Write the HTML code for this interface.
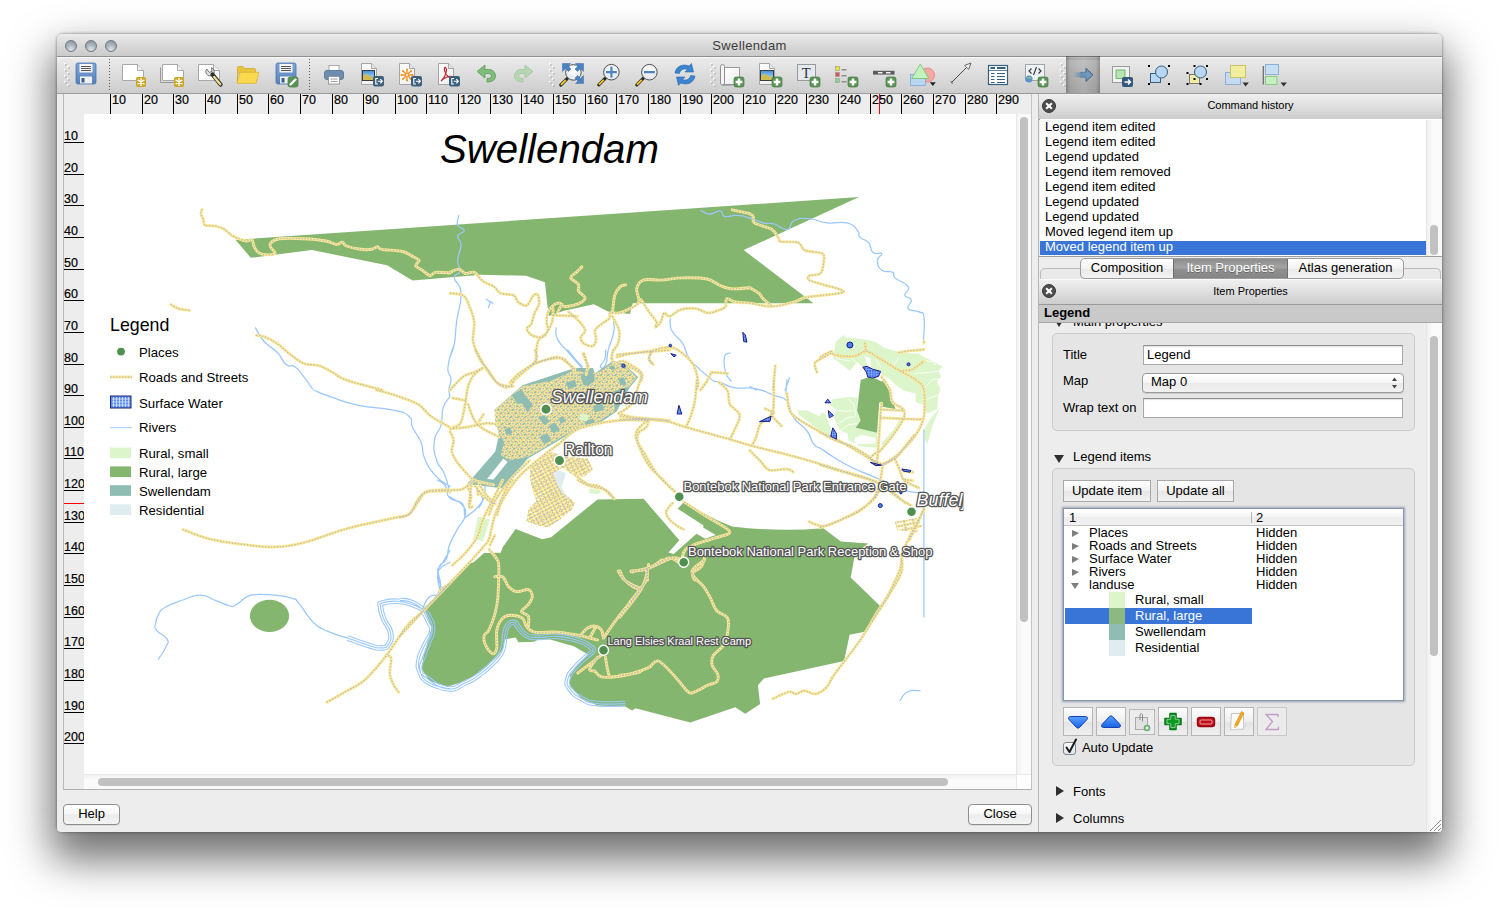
<!DOCTYPE html>
<html><head><meta charset="utf-8"><title>Swellendam</title>
<style>
*{box-sizing:border-box;margin:0;padding:0}
html,body{width:1499px;height:911px;background:#fff;overflow:hidden}
body{font-family:"Liberation Sans","DejaVu Sans",sans-serif;font-size:13px;color:#000;position:relative}
.abs{position:absolute}
#shadow{position:absolute;left:57px;top:34px;width:1385px;height:798px;border-radius:6px;box-shadow:0 22px 42px 6px rgba(0,0,0,.56),0 0 3px rgba(0,0,0,.5)}
#win{position:absolute;left:57px;top:34px;width:1385px;height:798px;border-radius:5px 5px 4px 4px;background:#ededed;overflow:hidden}
#win>*{position:absolute}
#title{left:0;top:0;width:1385px;height:23px;background:linear-gradient(#ebebeb,#d6d6d6 60%,#cbcbcb);border-bottom:1px solid #8e8e8e;letter-spacing:.35px;text-align:center;line-height:23px;font-size:13px;color:#3c3c3c}
.tl{position:absolute;top:6px;width:12px;height:12px;border-radius:50%;background:radial-gradient(circle at 50% 85%,#dfe6ec 0,#aeb7c0 45%,#858d96 100%);border:1px solid #707880}
#tool{left:0;top:23px;width:1385px;height:37px;background:linear-gradient(#ebebeb,#cdcdcd);border-bottom:1px solid #9b9b9b;border-top:1px solid #f8f8f8}
#tool svg{position:absolute;top:-2px;left:0}
/* composer view */
#view{left:6px;top:60px;width:969px;height:696px;background:#ededed;border-left:1px solid #b9b9b9;border-bottom:1px solid #b0b0b0;border-right:1px solid #c4c4c4}
#page{left:27px;top:80px;width:932px;height:660px;background:#fff;overflow:hidden}
#vsb{left:959px;top:80px;width:15px;height:660px;background:linear-gradient(90deg,#f2f2f2,#fbfbfb 40%,#fafafa);border-left:1px solid #e8e8e8}
#hsb{left:27px;top:740px;width:932px;height:15px;background:linear-gradient(#f2f2f2,#fbfbfb 40%,#fafafa);border-top:1px solid #e8e8e8}
#corner{left:959px;top:740px;width:15px;height:15px;background:#fff;border-left:1px solid #e8e8e8;border-top:1px solid #e8e8e8}
.thumb{position:absolute;background:#c1c1c1;border-radius:4px}
.th{position:absolute;top:0;width:1px;height:21px;background:#000}
.nh{position:absolute;top:-1px;-webkit-text-stroke:.2px #000;font-weight:normal;font-size:12.5px;line-height:14px;font-style:normal}
.tv{position:absolute;left:0;width:20px;height:1px;background:#000}
.nv{position:absolute;left:0;-webkit-text-stroke:.2px #000;font-weight:normal;font-size:12.5px;line-height:14px;width:20px;overflow:hidden;white-space:nowrap}
.btn{height:21px;border:1px solid #8e8e8e;border-radius:4px;background:linear-gradient(#fff 0,#f6f6f6 48%,#ececec 52%,#f4f4f4 100%);text-align:center;line-height:17px;font-size:13px;box-shadow:0 1px 0 rgba(0,0,0,.08)}
/* right panel */
#rp{left:981px;top:60px;width:404px;height:738px;background:#ededed;border-left:1px solid #b6b6b6;overflow:hidden}
#rpi{left:0;top:-1px;width:403px;height:739px}
#rpi>*{position:absolute}
#rp>*{position:absolute}
.dtitle{left:0;width:403px;background:linear-gradient(#f0f0f0,#cdcdcd);border-bottom:1px solid #9a9a9a;border-top:1px solid #fbfbfb;text-align:center;font-size:11px;color:#000}
.xbtn{position:absolute;left:3px;width:14px;height:14px;border-radius:50%;background:#4d4d4d;border:1px solid #3a3a3a}
.xbtn:before,.xbtn:after{content:"";position:absolute;left:5px;top:2px;width:2px;height:8px;background:#fff;transform:rotate(45deg)}
.xbtn:after{transform:rotate(-45deg)}
#hist{left:1px;top:26px;width:402px;height:137px;background:#fff;font-size:13px;line-height:15px;overflow:hidden;border-top:1px solid #fff}
#hist div{padding-left:5px;height:15px;line-height:13px;white-space:nowrap}
#hist .sel{background:#3875d7;color:#fff;width:387px;margin-left:0;padding-left:5px;height:14.5px;line-height:12px;margin-top:.5px}
.grp{background:#e5e5e5;border:1px solid #cbcbcb;border-radius:5px}
.inp{background:#fff;border:1px solid #a8a8a8;border-top-color:#8e8e8e;height:20px;font-size:13px;line-height:18px;padding-left:3px;box-shadow:inset 0 1px 1px rgba(0,0,0,.12)}
.lbl{font-size:13px;line-height:15px;white-space:nowrap}
.tri-d{width:0;height:0;border-left:5.5px solid transparent;border-right:5.5px solid transparent;border-top:8px solid #2f2f2f}
.tri-r{width:0;height:0;border-top:5.5px solid transparent;border-bottom:5.5px solid transparent;border-left:8px solid #2f2f2f}
.sq{height:20px;border:1px solid #a9a9a9;background:linear-gradient(#fff,#f1f1f1 50%,#e6e6e6 51%,#f2f2f2);text-align:center;line-height:18px;font-size:13px}
.tb{width:30px;height:29px;border:1px solid #b5b5b5;background:linear-gradient(#fdfdfd,#efefef 50%,#e4e4e4 51%,#efefef)}
</style></head><body>
<div id="shadow"></div>
<div id="win">
<div id="title"><span class="tl" style="left:8px"></span><span class="tl" style="left:28px"></span><span class="tl" style="left:48px"></span>Swellendam</div>
<div id="tool"><svg width="1385" height="37" viewBox="57 56 1385 37">
<defs>
<linearGradient id="gy" x1="0" y1="0" x2="0" y2="1"><stop offset="0" stop-color="#fbe07a"/><stop offset="1" stop-color="#f2c33c"/></linearGradient>
<linearGradient id="gb" x1="0" y1="0" x2="0" y2="1"><stop offset="0" stop-color="#7fa5d6"/><stop offset="1" stop-color="#5681bb"/></linearGradient>
<linearGradient id="gpg" x1="0" y1="0" x2="1" y2="1"><stop offset="0" stop-color="#fff"/><stop offset="1" stop-color="#ececec"/></linearGradient>
<g id="hdl"><rect x="1" y="1" width="1.5" height="1.5" fill="#a3a3a3"/><rect x="0" y="0" width="1.6" height="1.6" fill="#fff"/><rect x="4" y="4" width="1.5" height="1.5" fill="#a3a3a3"/><rect x="3" y="3" width="1.6" height="1.6" fill="#fff"/><rect x="1" y="7" width="1.5" height="1.5" fill="#a3a3a3"/><rect x="0" y="6" width="1.6" height="1.6" fill="#fff"/><rect x="4" y="10" width="1.5" height="1.5" fill="#a3a3a3"/><rect x="3" y="9" width="1.6" height="1.6" fill="#fff"/><rect x="1" y="13" width="1.5" height="1.5" fill="#a3a3a3"/><rect x="0" y="12" width="1.6" height="1.6" fill="#fff"/><rect x="4" y="16" width="1.5" height="1.5" fill="#a3a3a3"/><rect x="3" y="15" width="1.6" height="1.6" fill="#fff"/><rect x="1" y="19" width="1.5" height="1.5" fill="#a3a3a3"/><rect x="0" y="18" width="1.6" height="1.6" fill="#fff"/><rect x="4" y="22" width="1.5" height="1.5" fill="#a3a3a3"/><rect x="3" y="21" width="1.6" height="1.6" fill="#fff"/></g>
<g id="page"><path d="M0.5 0.5H15.5L21.5 6.5V16.5H0.5Z" fill="#fff" stroke="#a8a8a8"/><path d="M15.5 0.5V6.5H21.5" fill="#f0f0f0" stroke="#a8a8a8"/></g>
<g id="doc"><path d="M0.5 0.5H10.5L15.5 5.5V21.5H0.5Z" fill="url(#gpg)" stroke="#a5a5a5"/><path d="M10.5 0.5V5.5H15.5" fill="#e8e8e8" stroke="#a5a5a5"/></g>
<g id="star"><rect x="0" y="0" width="10" height="10" rx="2" fill="#c9a520"/><path d="M5 1.5V8.5M2 3.2L8 6.8M8 3.2L2 6.8" stroke="#fff" stroke-width="1.4" stroke-linecap="round"/></g>
<g id="plus"><rect x="0" y="0" width="10" height="10" rx="2" fill="#5b9357" stroke="#457b41" stroke-width=".7"/><path d="M5 1.600V8.400M1.600 5H8.400" stroke="#fff" stroke-width="2.500"/></g>
<g id="exp"><rect x="0" y="0" width="11" height="10.500" rx="2" fill="#3d607c"/><path d="M5 2.500H2.800V8H5M4.800 5.250H9.300M7.300 3.200L9.400 5.250L7.300 7.300" stroke="#fff" stroke-width="1.100" fill="none"/></g><linearGradient id="sky" x1="0" y1="0" x2="0" y2="1"><stop offset="0" stop-color="#3d8fe0"/><stop offset="1" stop-color="#cfe8f8"/></linearGradient>
<g id="floppy"><rect x="0" y="0" width="20" height="21" rx="2" fill="url(#gb)" stroke="#4a74ad" stroke-width=".8"/><rect x="3.5" y="1" width="13" height="8.5" fill="#f4f4f4"/><path d="M5 3.500H15M5 5.500H15M5 7.500H15" stroke="#555" stroke-width="1"/><rect x="4" y="13.500" width="12" height="7" fill="#f0f0f0"/><rect x="5.500" y="15" width="3" height="4.500" fill="#3d5f92"/></g>
<radialGradient id="lens" cx=".5" cy=".35" r=".7"><stop offset="0" stop-color="#fff"/><stop offset="1" stop-color="#dfe3e8"/></radialGradient><g id="mag"><path d="M0.800 18.800L7.200 12.400" stroke="#2a2a2a" stroke-width="3.200" stroke-linecap="round"/><path d="M0.900 18.700L5.800 13.800" stroke="#f2c81e" stroke-width="1.900" stroke-linecap="butt"/><circle cx="13.400" cy="6.200" r="7.800" fill="url(#lens)" stroke="#505050" stroke-width="1"/></g>
</defs>
<use href="#hdl" x="64" y="63"/>
<use href="#hdl" x="549" y="63"/>
<use href="#hdl" x="710" y="63"/>
<use href="#hdl" x="1060" y="63"/>
<path d="M109.5 59V90" stroke="#5a5a5a" stroke-width="1" stroke-dasharray="1 2"/>
<path d="M309.5 59V90" stroke="#5a5a5a" stroke-width="1" stroke-dasharray="1 2"/>
<use href="#floppy" x="76" y="63"/>
<use href="#page" x="122" y="64"/><use href="#star" x="136" y="77"/>
<path d="M160.5 67.500V82.500H178" fill="none" stroke="#9a9a9a"/><use href="#page" x="162" y="64"/><use href="#star" x="174" y="77"/>
<use href="#page" x="198" y="64"/><path d="M206.500 69.500L209.500 72.500L212 71L211 67.500A4.200 4.200 0 1 1 206.500 69.500Z" fill="#e4e4e4" stroke="#6a6a6a" stroke-width=".9" stroke-linejoin="round" transform="rotate(8 210 71)"/><path d="M212.500 74.500L220.500 84.500" stroke="#2e2e2e" stroke-width="4.200" stroke-linecap="round"/><path d="M214.200 77L220.200 84.300" stroke="#eadc8e" stroke-width="2.300" stroke-linecap="round"/>
<path d="M237.500 83V67.500Q237.500 66.500 238.500 66.500H243L244.500 68.500H254.500Q255.500 68.500 255.500 69.500V73H237.500Z" fill="#e9c43a" stroke="#d1ab2c" stroke-width=".8"/><path d="M237 83.300L240.200 72.300H258.900L256.200 83.300Z" fill="#fbd94c" stroke="#d9b43a" stroke-width=".8" stroke-linejoin="round"/>
<use href="#floppy" x="276" y="63"/><rect x="288" y="77" width="10" height="10" rx="2" fill="#5b9357" stroke="#457b41" stroke-width=".7"/><path d="M290.500 84.500L295.500 79.500" stroke="#fff" stroke-width="2.2" stroke-linecap="round"/>
<rect x="329" y="65.500" width="10" height="6" fill="#fff" stroke="#9a9a9a" stroke-width=".8"/><rect x="324.500" y="70.500" width="19" height="9" rx="2.5" fill="#6c8db0" stroke="#4f6f92" stroke-width=".8"/><rect x="328.500" y="76.500" width="11" height="7.500" fill="#fdfdfd" stroke="#8a8a8a" stroke-width=".8"/><path d="M330.500 79H337.500M330.500 81.500H337.500" stroke="#888" stroke-width=".8"/>
<use href="#doc" x="361" y="63"/><rect x="362.500" y="70.500" width="12" height="10" fill="url(#sky)" stroke="#3c3c3c"/><path d="M363 80V76.500L366 73.500L370 76L374 77.500V80Z" fill="#cdbb55"/><use href="#exp" x="373" y="76"/>
<use href="#doc" x="399" y="63"/><path d="M407 75L412.6 75.0M407 75L411.0 79.0M407 75L407.0 80.6M407 75L403.0 79.0M407 75L401.4 75.0M407 75L403.0 71.0M407 75L407.0 69.4M407 75L411.0 71.0" stroke="#f0921e" stroke-width="1.300"/><circle cx="412.6" cy="75.0" r="1" fill="#f0921e"/><circle cx="411.0" cy="79.0" r="1" fill="#f0921e"/><circle cx="407.0" cy="80.6" r="1" fill="#f0921e"/><circle cx="403.0" cy="79.0" r="1" fill="#f0921e"/><circle cx="401.4" cy="75.0" r="1" fill="#f0921e"/><circle cx="403.0" cy="71.0" r="1" fill="#f0921e"/><circle cx="407.0" cy="69.4" r="1" fill="#f0921e"/><circle cx="411.0" cy="71.0" r="1" fill="#f0921e"/><circle cx="407" cy="75" r="1.500" fill="#fff" stroke="#f0921e" stroke-width=".8"/><use href="#exp" x="411" y="76"/>
<use href="#doc" x="438" y="63"/><path d="M441 81C446 77 447.500 69 445.500 67.500C443.500 67 444 73 448 76.500C451 79 453.500 77.500 452 76.500C449 75.500 444 78 441 81Z" fill="none" stroke="#c3272d" stroke-width="1.200"/><use href="#exp" x="449" y="76"/>
<path d="M477 71.500L485 65V69.500H488.500C493.500 69.500 495.500 73 495.500 76C495.500 80 492 82 487 82V78.500C490 78.500 491.500 77.500 491.500 76C491.500 74.500 490 73.500 488 73.500H485V78Z" fill="#80bb7a" stroke="#5b9a57" stroke-width=".8" stroke-linejoin="round"/>
<path d="M533 71.500L525 65V69.500H521.500C516.500 69.500 514.500 73 514.500 76C514.500 80 518 82 523 82V78.500C520 78.500 518.500 77.500 518.500 76C518.500 74.500 520 73.500 522 73.500H525V78Z" fill="#b4d6b0" stroke="#a3c7a0" stroke-width=".8" stroke-linejoin="round"/>
<use href="#mag" x="560" y="66.200"/>
<g fill="#4b82c4" stroke="#3a6aa8" stroke-width=".5"><path d="M562.500 63.500H570.500L568 66L571 69L568.500 71.500L565.500 68.500L562.500 71.500Z"/><path d="M583.500 63.500H575.500L578 66L575 69L577.500 71.500L580.500 68.500L583.500 71.500Z"/><path d="M583.500 83.500H575.500L578 81L575 78L577.500 75.500L580.500 78.500L583.500 75.500Z"/></g>
<use href="#mag" x="598" y="66"/><path d="M606 72.200H616.800M611.400 66.800V77.600" stroke="#4a82c4" stroke-width="2.200"/>
<use href="#mag" x="636" y="66"/><path d="M644 72.200H654.800" stroke="#4a82c4" stroke-width="2.200"/>
<g fill="#3b84d0" stroke="#2c68ad" stroke-width=".6" stroke-linejoin="round"><path d="M675 73C676 66 683 63.500 689 66L691.500 63.500L693.500 72H685L687.500 69.500C683.500 68 680 70 679.500 73.500Z"/><path d="M695 76C694 83 687 85.500 681 83L678.500 85.500L676.500 77H685L682.500 79.500C686.500 81 690 79 690.500 75.500Z"/></g>
<rect x="723.500" y="67.500" width="16" height="17" fill="url(#gpg)" stroke="#9a9a9a"/><rect x="720.500" y="64.500" width="4" height="20.500" rx="2" fill="#f6f6f6" stroke="#8f8f8f"/><path d="M722.500 85Q724 85.500 739.500 84.500" stroke="#8f8f8f" fill="none"/><use href="#plus" x="734" y="77"/>
<use href="#doc" x="759" y="63"/><rect x="760.500" y="70.500" width="13" height="10" fill="url(#sky)" stroke="#3c3c3c"/><path d="M761 80V76.500L764 73.500L768.500 76L773 77.500V80Z" fill="#cdbb55"/><use href="#plus" x="772" y="77"/>
<rect x="797.500" y="64.500" width="18" height="16" fill="#e4e9f0" stroke="#9a9a9a"/><text x="806.300" y="78" font-family="Liberation Serif,serif" font-size="14.500" text-anchor="middle" fill="#333">T</text><use href="#plus" x="810" y="77"/>
<rect x="835.500" y="66.500" width="4" height="4" fill="#f2e02a" stroke="#999" stroke-width=".6"/><rect x="835.500" y="72.500" width="4" height="4" fill="#d9534f" stroke="#999" stroke-width=".6"/><rect x="835.500" y="78.500" width="4" height="4" fill="#8fd08f" stroke="#999" stroke-width=".6"/><path d="M841.500 69.700H846.500M841.500 75.700H846.500M841.500 81.700H846.500" stroke="#8e8e8e" stroke-width="1.500"/><use href="#plus" x="848" y="77"/>
<rect x="873" y="70.800" width="21.500" height="3.800" fill="#5c5c5c"/><path d="M878 72.700H882.500M886 72.700H890.500" stroke="#f2f2f2" stroke-width="1.400"/><use href="#plus" x="886" y="77"/>
<circle cx="927.500" cy="75" r="7" fill="#f4a9a6" stroke="#e07f7c" stroke-width=".8"/><rect x="910.500" y="74.500" width="15" height="11" fill="#b9d6f2" stroke="#7ea8d6" stroke-width=".8"/><path d="M920.300 64L928.800 78.500H911.800Z" fill="#c3f2be" stroke="#72c06e" stroke-width=".8"/><path d="M929.800 82.300H935.800L932.800 86Z" fill="#222"/>
<path d="M951.500 82.500L967.500 66.500" stroke="#4a4a4a" stroke-width="1"/><path d="M971 63L968.600 69.400L964.600 65.400Z" fill="#f4f4f4" stroke="#4a4a4a" stroke-width=".8"/><path d="M950.500 81.500L952 82M952 84L952.500 82.500" stroke="#4a4a4a" stroke-width=".8"/>
<rect x="988.500" y="65.500" width="19" height="19" fill="#fff" stroke="#35607f" stroke-width="1.200"/><path d="M990.500 68H995M997 68H1005.500" stroke="#35607f" stroke-width="2"/><path d="M988.500 70.500H1007.500" stroke="#35607f" stroke-width=".8"/><path d="M991 73.500H994.500M997 73.500H1005M991 76.500H994.500M997 76.500H1005M991 79.500H994.500M997 79.500H1005M991 82.500H994.500M997 82.500H1005" stroke="#35607f" stroke-width="1"/>
<rect x="1025.500" y="64.500" width="19" height="16" fill="#eef2f6" stroke="#a5a5a5"/><path d="M1031.500 68.500L1029 71L1031.500 73.500M1038.500 68.500L1041 71L1038.500 73.500M1036.500 67L1033.500 75" stroke="#333" stroke-width="1.100" fill="none"/><circle cx="1029" cy="79" r="3.500" fill="#5a8fd0"/><path d="M1027 78C1028.500 76.500 1030 79 1031.500 77.500" stroke="#7fc97f" stroke-width="1.500" fill="none"/><use href="#plus" x="1038" y="77"/>
<defs><linearGradient id="prs" x1="0" y1="0" x2="1" y2="0"><stop offset="0" stop-color="#000" stop-opacity=".38"/><stop offset=".12" stop-color="#000" stop-opacity=".23"/><stop offset=".5" stop-color="#000" stop-opacity=".17"/><stop offset=".88" stop-color="#000" stop-opacity=".23"/><stop offset="1" stop-color="#000" stop-opacity=".38"/></linearGradient><linearGradient id="arr" x1="0" y1="0" x2="1" y2="0"><stop offset="0" stop-color="#5f8ab0" stop-opacity="0"/><stop offset=".6" stop-color="#5f8ab0" stop-opacity=".9"/><stop offset="1" stop-color="#6f98bc"/></linearGradient></defs><rect x="1066" y="56" width="34" height="37" fill="url(#prs)"/><rect x="1066" y="57" width="34" height="3" fill="#000" opacity=".08"/>
<rect x="1073" y="72.300" width="14" height="5" fill="url(#arr)"/><path d="M1086 72.300V68.200L1093 74.800L1086 81.400V77.300" fill="#6f98bc" stroke="#35607f" stroke-width=".9" stroke-linejoin="round"/><path d="M1080 72.300H1086M1080 77.300H1086" stroke="#35607f" stroke-width=".7" opacity=".6"/>
<rect x="1112.500" y="66.500" width="17" height="16" fill="#f2f2f2" stroke="#9a9a9a"/><rect x="1116" y="70" width="9" height="8.500" fill="#b7e4b2" stroke="#5aa856" stroke-width=".8"/><rect x="1122" y="77" width="11" height="10" rx="2" fill="#35587a"/><path d="M1124.500 82H1130.500M1128 79.500L1130.500 82L1128 84.500" stroke="#fff" stroke-width="1.400" fill="none"/>
<rect x="1150.500" y="73.500" width="10" height="9" fill="#b9d6f2" stroke="#35607f"/><circle cx="1161.500" cy="72" r="6" fill="#b9d6f2" stroke="#35607f"/><g fill="#000"><rect x="1148" y="65" width="2" height="2"/><rect x="1168" y="65" width="2" height="2"/><rect x="1148" y="83" width="2" height="2"/><rect x="1168" y="83" width="2" height="2"/></g>
<rect x="1189.500" y="74.500" width="10" height="9" fill="#f2eda0" stroke="#777"/><circle cx="1200.500" cy="72" r="6" fill="#b9d6f2" stroke="#35607f"/><g fill="#000"><rect x="1186.500" y="72" width="2" height="2"/><rect x="1186.500" y="83" width="2" height="2"/><rect x="1193.500" y="65" width="2" height="2"/><rect x="1206" y="65" width="2" height="2"/><rect x="1193.500" y="78" width="2" height="2"/><rect x="1206" y="78" width="2" height="2"/><rect x="1199.500" y="83" width="2" height="2"/></g>
<rect x="1225.500" y="72.500" width="15" height="12" fill="#c5daf2" stroke="#8fb0d6"/><rect x="1230.500" y="65.500" width="15" height="12" fill="#f2eda0" stroke="#c9c36a"/><path d="M1242.500 82.500H1248.800L1245.600 86.500Z" fill="#333"/>
<path d="M1263.300 66V84.500" stroke="#666" stroke-width="1.200"/><rect x="1265.500" y="64.500" width="13" height="10" fill="#c5dff5" stroke="#8fb0d6"/><rect x="1265.500" y="76.500" width="11.500" height="8" fill="#c4f0be" stroke="#8fc98a"/><path d="M1280.600 82.500H1286.900L1283.700 86.500Z" fill="#333"/>
</svg></div>
<div id="view"></div>
<div style="left:27px;top:60px;width:947px;height:20px;overflow:hidden;background:#ededed" id="hr">
<i class="th" style="left:26px"></i><b class="nh" style="left:28px">10</b>
<i class="th" style="left:58px"></i><b class="nh" style="left:60px">20</b>
<i class="th" style="left:89px"></i><b class="nh" style="left:91px">30</b>
<i class="th" style="left:121px"></i><b class="nh" style="left:123px">40</b>
<i class="th" style="left:153px"></i><b class="nh" style="left:155px">50</b>
<i class="th" style="left:184px"></i><b class="nh" style="left:186px">60</b>
<i class="th" style="left:216px"></i><b class="nh" style="left:218px">70</b>
<i class="th" style="left:248px"></i><b class="nh" style="left:250px">80</b>
<i class="th" style="left:279px"></i><b class="nh" style="left:281px">90</b>
<i class="th" style="left:311px"></i><b class="nh" style="left:313px">100</b>
<i class="th" style="left:342px"></i><b class="nh" style="left:344px">110</b>
<i class="th" style="left:374px"></i><b class="nh" style="left:376px">120</b>
<i class="th" style="left:406px"></i><b class="nh" style="left:408px">130</b>
<i class="th" style="left:437px"></i><b class="nh" style="left:439px">140</b>
<i class="th" style="left:469px"></i><b class="nh" style="left:471px">150</b>
<i class="th" style="left:501px"></i><b class="nh" style="left:503px">160</b>
<i class="th" style="left:532px"></i><b class="nh" style="left:534px">170</b>
<i class="th" style="left:564px"></i><b class="nh" style="left:566px">180</b>
<i class="th" style="left:596px"></i><b class="nh" style="left:598px">190</b>
<i class="th" style="left:627px"></i><b class="nh" style="left:629px">200</b>
<i class="th" style="left:659px"></i><b class="nh" style="left:661px">210</b>
<i class="th" style="left:691px"></i><b class="nh" style="left:693px">220</b>
<i class="th" style="left:722px"></i><b class="nh" style="left:724px">230</b>
<i class="th" style="left:754px"></i><b class="nh" style="left:756px">240</b>
<i class="th" style="left:786px"></i><b class="nh" style="left:788px">250</b>
<i class="th" style="left:817px"></i><b class="nh" style="left:819px">260</b>
<i class="th" style="left:849px"></i><b class="nh" style="left:851px">270</b>
<i class="th" style="left:881px"></i><b class="nh" style="left:883px">280</b>
<i class="th" style="left:912px"></i><b class="nh" style="left:914px">290</b>
<i class="th" style="left:795px;background:#ff0000"></i>
</div>
<div style="left:7px;top:80px;width:20px;height:660px;overflow:hidden;background:#ededed" id="vr">
<i class="tv" style="top:28px"></i><b class="nv" style="top:15px">10</b>
<i class="tv" style="top:60px"></i><b class="nv" style="top:47px">20</b>
<i class="tv" style="top:91px"></i><b class="nv" style="top:78px">30</b>
<i class="tv" style="top:123px"></i><b class="nv" style="top:110px">40</b>
<i class="tv" style="top:155px"></i><b class="nv" style="top:142px">50</b>
<i class="tv" style="top:186px"></i><b class="nv" style="top:173px">60</b>
<i class="tv" style="top:218px"></i><b class="nv" style="top:205px">70</b>
<i class="tv" style="top:250px"></i><b class="nv" style="top:237px">80</b>
<i class="tv" style="top:281px"></i><b class="nv" style="top:268px">90</b>
<i class="tv" style="top:313px"></i><b class="nv" style="top:300px">100</b>
<i class="tv" style="top:344px"></i><b class="nv" style="top:331px">110</b>
<i class="tv" style="top:376px"></i><b class="nv" style="top:363px">120</b>
<i class="tv" style="top:408px"></i><b class="nv" style="top:395px">130</b>
<i class="tv" style="top:439px"></i><b class="nv" style="top:426px">140</b>
<i class="tv" style="top:471px"></i><b class="nv" style="top:458px">150</b>
<i class="tv" style="top:503px"></i><b class="nv" style="top:490px">160</b>
<i class="tv" style="top:534px"></i><b class="nv" style="top:521px">170</b>
<i class="tv" style="top:566px"></i><b class="nv" style="top:553px">180</b>
<i class="tv" style="top:598px"></i><b class="nv" style="top:585px">190</b>
<i class="tv" style="top:629px"></i><b class="nv" style="top:616px">200</b>
<i class="tv" style="top:389px;background:#ff0000"></i>
</div>
<div id="page"><svg width="932" height="660" viewBox="84 114 932 660" style="position:absolute;left:0;top:0;font-family:'Liberation Sans',sans-serif">
<defs><clipPath id="mapclip"><rect x="100" y="190" width="863.5" height="560"/></clipPath></defs>
<g clip-path="url(#mapclip)">
<g id="landuse">
<path fill="#85b66f" d="M859 197 L235.5 239.8 L250.8 257.8 L312 250 L387 265.3 L412.5 280.6 L480.6 274.8 L526 275.7 L544.9 282.2 L547.5 306 L549 316 L564 310.8 L594 304.2 L608 311.5 L630 314.1 L632.7 303.3 L813.5 303.3 L743.7 250.1 Z"/>
<path fill="#85b66f" d="M424.7 610 L468.1 564 L474 562 L484 553.1 L500.7 552.7 L502.7 547.2 L515.6 529 L542.2 539.3 L551.1 537.3 L597.5 499.4 L643.6 498.8 L679.4 540.3 L668.4 552.6 L673.7 553.9 L696.5 533.7 L705.3 538.7 L715.8 535 L703.1 527.6 L703.6 525.4 L677.7 508.7 L683.4 502.6 L716.7 520.1 L732 526.5 Q778 532 823.3 528.2 L840.9 541.4 L868.3 543.6 L855.1 553.5 L850.7 577.6 L880.4 606.2 L866.1 631.4 L849.6 634.7 L844.1 661 L763.9 678.6 L757.9 685.2 L760.1 703.9 L745.2 713.7 L735.3 707.2 L690.3 722.5 L635.4 708.3 L632.1 710.4 L625.2 706.5 L597.5 705.6 L581.7 698.6 L569.9 686.8 L569.9 675 L577.8 665 L587.7 654.2 L573.8 646.3 L550.1 639.4 L538.3 639.4 L534.3 641.8 L518.5 642.3 L515.6 637.4 L504.7 639.4 L502.7 649.3 L496.8 657.2 L479 673 L465.2 680.9 L447.4 686.8 L429.6 680.9 L421.7 669 L423.7 655.2 L431.6 627.5 Z"/>
<ellipse cx="269.5" cy="615.9" rx="19.6" ry="16.2" fill="#85b66f"/>
<path fill="#dcf5cb" fill-rule="evenodd" d="M834.2 351.4 L835.7 342.1 L843.5 335.0 L846.4 337.8 L857.1 338.6 L864.2 339.3 L875.6 342.1 L884.2 347.8 L897.1 351.4 L901.3 352.8 L918.5 353.5 L925.6 357.8 L942.7 366.4 L938.4 370.7 L941.3 376.4 L937.0 382.1 L940.6 389.2 L938.4 394.9 L937.0 409.2 L927.0 413.5 L924.2 404.9 L915.6 402.1 L915.6 393.5 L904.2 390.7 L895.6 384.9 L889.9 379.2 L881.4 375.0 L878.5 370.7 L871.4 367.8 L869.9 357.8 L865.6 360.7 L867.8 366.4 L861.4 366.4 L857.1 362.1 L849.9 370.7 L832.8 357.8Z M832.8 399.2 L847.1 397.1 L857.8 397.8 L857.1 410.6 L860.7 420.6 L855.7 427.8 L877.1 432.8 L877.1 447.8 L858.5 446.3 L857.1 443.5 L848.5 440.6 L847.8 433.5 L840.0 430.6 L837.1 424.9 L834.2 417.8 L835.7 409.2 L830.0 404.9Z M854.9 437.8 L861.4 434.9 L875.6 437.8 L875.6 443.5 L858.5 444.2 L854.2 441.3Z M797.9 410.6 L807.1 410.6 L820.0 416.4 L820.7 412.8 L825.7 413.5 L827.1 419.2 L830.7 427.8 L831.4 433.5 L825.7 434.9 L818.5 429.2 L808.6 422.1 L798.6 414.9Z M939.9 407.8 L932.7 424.9 L927.0 444.9 L924.9 439.2 L924.2 429.2 L931.3 417.8Z M899.9 419.2 L902.8 420.6 L889.9 437.8 L882.8 446.3 L881.4 443.5 L892.8 430.6Z"/>
<path fill="none" stroke="#fff" stroke-width=".8" d="M898.5 357.8 L894.2 365.0 M875.6 359.3 L881.4 367.8 M925.6 360.7 L932.7 362.1 L935.6 365.0 M914.2 373.5 L931.3 372.1 L941.3 370.7 M924.2 387.8 L932.7 379.2 L939.9 379.2 M849.9 356.4 L857.1 363.5 M832.8 355.7 L840.0 359.3 L849.9 360.7 M847.1 397.8 L854.2 404.9 L855.7 416.4 M832.8 409.2 L844.2 411.4 L852.8 410.6 M838.5 423.5 L847.1 417.8 L854.2 416.4 M840.0 430.6 L848.5 424.9 L857.1 423.5 M938.4 394.9 L927.0 399.2"/>
<path fill="#fff" d="M864.2 355.7 L870.6 358.5 L869.9 364.3 L867.1 362.1Z"/>
<path fill="#85b66f" d="M860.7 380.0 L867.1 377.8 L875.6 378.5 L881.4 381.4 L884.2 380.7 L888.5 389.2 L895.6 409.2 L881.4 406.4 L880.6 402.1 L879.2 402.8 L877.1 432.8 L855.7 427.8 L860.7 420.6 L857.1 410.6Z"/>
</g>
<g fill="none" stroke="#9ac8fc" stroke-width="1.25" stroke-linejoin="round" stroke-linecap="round">
<path d="M255.4 327.9 C257.8 331.6 258.4 335.0 264.2 341.5 C270.1 348.1 271.5 346.4 277.4 352.5 C283.2 358.7 281.5 360.8 286.2 364.6 C290.9 368.4 290.3 363.6 295.0 366.8 C299.6 370.0 299.1 370.8 303.7 376.7 C308.4 382.5 310.2 385.5 312.5 388.8 M313.6 390.0 C318.0 391.8 318.1 392.5 330.1 396.6 C342.1 400.7 342.3 401.9 358.7 405.4 C375.1 408.9 378.1 406.8 391.6 409.8 C405.1 412.7 403.6 411.7 409.2 416.4 C414.7 421.0 409.2 420.3 412.5 427.3 C415.7 434.4 418.0 434.5 421.2 442.7 C424.5 450.9 420.7 449.3 424.5 458.1 C428.4 466.9 428.7 468.0 435.5 475.7 C442.3 483.3 446.2 483.7 450.0 486.6 M450.0 396.6 C448.2 399.5 445.6 400.0 443.2 407.6 C440.8 415.2 443.4 416.4 441.0 425.1 C438.7 433.9 435.6 431.1 434.4 440.5 C433.3 449.9 434.0 451.5 436.6 460.3 C439.3 469.1 440.7 464.7 444.3 473.5 C447.9 482.2 448.5 488.0 450.0 493.2 M450.0 550.3 C447.9 553.8 445.4 557.7 442.1 563.5 C438.8 569.4 437.7 565.2 437.7 572.3 C437.7 579.4 440.9 585.3 442.1 590.1 M158.3 659.3 C160.2 656.2 163.0 653.2 165.4 647.9 C167.7 642.5 169.5 643.8 167.1 639.1 C164.8 634.4 159.7 634.4 156.6 630.3 C153.5 626.2 154.9 628.1 155.5 623.7 C156.1 619.3 156.1 618.2 158.8 613.8 C161.4 609.4 158.9 610.9 165.4 607.2 C171.8 603.5 173.6 603.2 182.9 600.0 C192.3 596.8 191.7 595.0 200.5 595.1 C209.3 595.3 208.3 597.8 215.9 600.6 C223.5 603.4 223.8 604.5 229.1 605.7 C234.3 606.9 231.0 607.4 235.7 605.0 C240.3 602.7 241.4 599.7 246.6 596.9 C251.9 594.1 249.6 595.3 255.4 594.7 C261.3 594.1 259.2 593.9 268.6 594.7 C278.0 595.5 282.4 595.3 290.6 597.8 C298.8 600.2 293.5 597.6 299.4 603.9 C305.2 610.3 304.9 614.2 312.5 621.5 C320.1 628.8 318.5 627.0 327.9 631.4 C337.3 635.8 342.4 636.2 347.7 638.0 M450.0 562.2 C447.3 564.0 443.2 564.7 439.9 568.8 C436.6 572.9 438.0 571.1 437.7 577.6 C437.4 584.0 441.2 587.7 438.8 592.9 C436.5 598.2 433.3 592.9 428.9 597.3 C424.5 601.7 424.1 606.2 422.3 609.4 M458.8 215.3 C458.5 217.9 456.2 221.0 457.7 225.1 C459.2 229.2 464.3 227.7 464.3 230.6 C464.3 233.6 458.6 232.3 457.7 236.1 C456.8 239.9 461.0 238.5 461.0 244.9 C461.0 251.4 458.0 253.3 457.7 260.3 C457.4 267.3 460.8 266.6 459.9 271.3 C459.0 276.0 454.1 272.0 454.4 277.9 C454.7 283.7 460.4 281.5 461.0 293.2 C461.6 304.9 458.3 308.3 456.6 321.8 C454.8 335.3 456.1 334.4 454.4 343.7 C452.6 353.1 451.2 353.4 450.0 356.9 M556.1 327.9 C556.5 331.0 554.3 332.8 557.6 339.4 C561.0 345.9 562.2 344.9 568.6 352.5 C575.0 360.1 578.3 363.8 581.8 367.9 M613.6 321.8 C613.6 324.7 615.1 325.1 613.6 332.8 C612.2 340.4 610.2 342.1 608.1 350.3 C606.1 358.5 608.3 357.7 605.9 363.5 C603.6 369.4 604.6 365.2 599.4 372.3 C594.1 379.4 589.7 385.3 586.2 390.1 M670.3 318.5 C670.7 321.7 668.5 323.8 671.8 330.6 C675.2 337.3 678.4 336.7 682.8 343.7 C687.2 350.8 684.2 350.5 688.3 356.9 C692.4 363.4 691.5 361.5 698.2 367.9 C704.9 374.3 709.5 377.6 713.6 381.1 M730.0 353.0 C728.6 354.0 725.7 351.8 724.5 356.9 C723.4 362.1 723.9 365.9 725.6 372.3 C727.4 378.7 729.7 378.7 731.1 381.1 M701.0 210.2 C703.2 211.3 704.1 214.0 709.2 214.2 C714.3 214.3 716.1 210.3 720.2 210.9 C724.3 211.5 720.4 215.2 724.5 216.4 C728.6 217.5 730.3 215.3 735.5 215.3 C740.8 215.3 740.4 215.5 744.3 216.4 C748.2 217.2 748.5 218.0 750.0 218.6 M486.2 299.2 L492.8 303.1 M490.6 302.0 L488.4 307.5 M750.0 217.5 C753.5 218.9 756.7 221.2 763.2 222.9 C769.6 224.7 767.7 222.3 774.2 224.0 C780.6 225.8 782.1 230.4 787.3 229.5 C792.6 228.7 788.1 223.7 793.9 220.7 C799.8 217.8 800.5 218.0 809.3 218.6 C818.1 219.1 816.9 221.8 826.9 222.9 C836.8 224.1 838.4 220.9 846.6 222.9 C854.8 225.0 854.1 226.8 857.6 230.6 C861.1 234.4 856.9 234.0 859.8 237.2 C862.7 240.4 865.1 238.6 868.6 242.7 C872.1 246.8 869.5 249.7 873.0 252.6 C876.5 255.5 880.6 251.6 881.8 253.7 C883.0 255.7 877.4 255.9 877.4 260.3 C877.4 264.7 877.7 266.9 881.8 270.2 C885.9 273.4 889.2 270.3 892.8 272.4 C896.3 274.4 890.9 274.0 895.0 277.9 C899.1 281.7 905.5 282.0 908.1 286.6 C910.8 291.3 904.0 291.9 904.8 295.4 C905.7 298.9 910.6 296.3 911.4 299.8 C912.3 303.3 906.1 305.4 908.1 308.6 C910.2 311.8 914.9 309.6 919.1 311.9 C923.3 314.2 922.8 310.1 924.0 317.4 C925.1 324.7 923.6 333.5 923.5 339.4 M789.5 377.8 L785.1 390.1 M750.0 386.6 L756.6 390.1 M713.6 381.1 C715.6 381.5 715.5 380.9 721.0 382.6 C726.5 384.4 724.8 386.0 734.2 387.7 C743.6 389.3 745.6 386.7 756.2 388.8 C766.7 390.8 765.5 392.2 773.7 395.4 C781.9 398.6 781.7 395.0 786.9 400.9 C792.2 406.7 788.2 409.4 793.5 417.3 C798.8 425.2 801.4 423.5 806.7 430.5 C812.0 437.5 809.8 439.0 813.3 443.7 C816.8 448.4 818.1 446.9 819.9 448.1 M786.9 380.0 L785.8 393.2 M820.0 448.0 C823.9 450.6 826.1 452.5 834.5 457.7 C842.9 462.8 842.4 462.8 851.4 467.3 C860.4 471.9 859.9 471.0 868.3 474.6 C876.7 478.1 873.1 476.4 882.8 480.6 C892.5 484.8 893.6 487.1 904.5 490.3 C915.5 493.5 918.7 492.1 923.9 492.7 M923.9 429.9 L923.9 617.1 M437.5 480.0 C439.6 481.6 442.3 481.2 445.4 485.9 C448.6 490.7 445.2 493.0 449.4 497.8 C453.6 502.5 457.0 499.0 461.2 503.7 C465.4 508.4 466.2 508.7 465.2 515.6 C464.1 522.4 461.5 521.5 457.3 529.4 C453.1 537.3 452.3 537.3 449.4 545.2 C446.5 553.1 449.3 552.7 446.4 559.0 C443.5 565.3 440.4 560.5 438.5 568.9 C436.7 577.3 443.5 580.1 439.5 590.6 C435.6 601.2 427.9 603.7 423.7 608.4 M483.0 480.0 C483.5 483.2 486.0 485.0 484.9 491.9 C483.9 498.7 484.3 498.8 479.0 505.7 C473.7 512.5 468.9 514.4 465.2 517.5 M920.0 690.7 C916.7 691.0 913.1 689.1 907.7 691.8 C902.4 694.4 902.1 698.2 900.0 700.6 M567.7 350.0 C570.1 352.9 572.9 356.5 576.7 360.9 C580.6 365.2 580.7 364.8 582.2 366.3 M605.7 350.0 C605.5 352.4 606.3 354.7 604.8 359.1 C603.4 363.4 601.0 362.9 600.3 366.3 C599.6 369.7 605.5 366.4 602.1 371.7 C598.7 377.0 596.8 376.1 587.6 386.2 C578.4 396.4 577.4 399.1 567.7 409.8 C558.0 420.4 561.1 415.9 551.4 426.0 C541.7 436.2 541.6 439.1 531.5 447.8 C521.3 456.5 520.6 452.8 513.4 458.6 C506.1 464.4 510.1 464.0 504.3 469.5 C498.5 475.1 495.0 476.8 491.6 479.5 M450.0 496.7 C451.4 497.6 452.1 498.4 455.4 500.3 C458.8 502.2 460.3 500.0 462.7 503.9 C465.1 507.8 464.0 512.0 464.5 515.0 M480.8 494.9 C481.3 496.3 483.1 496.9 482.6 500.3 C482.1 503.7 479.9 505.6 479.0 507.5 M454.4 343.7 C453.2 347.2 451.4 352.4 450.0 357.0 C448.6 361.6 449.5 357.3 449.0 361.0 C448.5 364.7 447.5 366.2 448.0 371.0 C448.5 375.8 450.7 374.1 451.0 379.0 C451.3 383.9 449.3 384.8 449.0 389.5 C448.7 394.2 449.7 394.7 450.0 396.6"/>
</g>
<mask id="m3" maskUnits="userSpaceOnUse" x="84" y="114" width="932" height="660"><g fill="none" stroke-linejoin="round"><path d="M347.7 638.0 C353.5 640.0 360.8 643.0 369.6 645.7 C378.4 648.3 375.6 648.1 380.6 647.9 C385.6 647.6 385.7 648.7 388.3 644.6 C390.9 640.5 391.7 639.2 390.5 632.5 C389.3 625.7 386.5 626.0 383.9 619.3 C381.3 612.6 380.9 611.6 380.6 607.2 C380.3 602.8 378.1 604.4 382.8 602.8 C387.5 601.2 390.0 600.7 398.2 601.3 C406.4 601.9 406.5 602.4 413.6 605.0 C420.6 607.6 420.2 606.9 424.5 611.0 C428.9 615.1 428.0 615.2 430.0 620.4 C432.1 625.6 433.7 623.5 432.2 630.3 C430.8 637.0 428.1 637.8 424.5 645.7 C421.0 653.6 420.2 652.9 419.1 659.9 C417.9 667.0 417.8 666.2 420.2 672.0 C422.5 677.9 422.0 677.8 427.8 681.9 C433.7 686.0 436.2 685.6 442.1 687.4 C448.0 689.1 447.9 688.2 450.0 688.5 M400.0 600.5 C403.2 601.0 405.5 599.8 411.9 602.5 C418.2 605.1 419.0 606.2 423.7 610.4 C428.4 614.6 427.3 613.0 429.6 618.3 C432.0 623.5 433.1 623.3 432.6 630.1 C432.1 637.0 430.6 636.0 427.7 644.0 C424.8 651.9 423.3 655.7 421.7 660.0 M423.7 611.7 C425.3 614.9 427.5 618.3 429.6 623.6 C431.7 628.8 433.2 623.1 431.6 631.5 C430.0 639.9 426.9 645.2 423.7 655.2 C420.5 665.2 418.7 662.7 419.8 669.0 C420.8 675.3 420.3 673.6 427.7 678.9 C435.0 684.2 437.4 687.7 447.4 688.8 C457.4 689.8 456.8 686.5 465.2 682.8 C473.6 679.2 471.1 680.7 479.0 674.9 C486.9 669.1 488.5 668.0 494.8 661.1 C501.1 654.3 500.1 656.1 502.7 649.3 C505.3 642.4 503.4 641.8 504.7 635.4 C506.0 629.1 505.0 629.0 507.7 625.6 C510.3 622.1 511.7 622.1 514.6 622.6 C517.5 623.1 515.4 624.1 518.5 627.5 C521.7 631.0 521.2 632.8 526.4 635.4 C531.7 638.1 529.8 637.1 538.3 637.4 C546.7 637.7 547.5 635.6 558.0 636.4 C568.6 637.2 569.3 637.7 577.8 640.4 C586.2 643.0 585.7 643.4 589.6 646.3 C593.6 649.2 593.6 648.3 592.6 651.2 C591.5 654.1 590.7 652.4 585.7 657.2 C580.7 661.9 578.6 663.2 573.8 669.0 C569.1 674.8 569.0 673.6 567.9 678.9 C566.8 684.2 566.2 683.5 569.9 688.8 C573.6 694.0 574.4 694.7 581.7 698.6 C589.1 702.6 585.9 702.3 597.5 703.6 C609.1 704.9 617.8 703.6 625.2 703.6" stroke="#fff" stroke-width="5.6"/><path d="M347.7 638.0 C353.5 640.0 360.8 643.0 369.6 645.7 C378.4 648.3 375.6 648.1 380.6 647.9 C385.6 647.6 385.7 648.7 388.3 644.6 C390.9 640.5 391.7 639.2 390.5 632.5 C389.3 625.7 386.5 626.0 383.9 619.3 C381.3 612.6 380.9 611.6 380.6 607.2 C380.3 602.8 378.1 604.4 382.8 602.8 C387.5 601.2 390.0 600.7 398.2 601.3 C406.4 601.9 406.5 602.4 413.6 605.0 C420.6 607.6 420.2 606.9 424.5 611.0 C428.9 615.1 428.0 615.2 430.0 620.4 C432.1 625.6 433.7 623.5 432.2 630.3 C430.8 637.0 428.1 637.8 424.5 645.7 C421.0 653.6 420.2 652.9 419.1 659.9 C417.9 667.0 417.8 666.2 420.2 672.0 C422.5 677.9 422.0 677.8 427.8 681.9 C433.7 686.0 436.2 685.6 442.1 687.4 C448.0 689.1 447.9 688.2 450.0 688.5 M400.0 600.5 C403.2 601.0 405.5 599.8 411.9 602.5 C418.2 605.1 419.0 606.2 423.7 610.4 C428.4 614.6 427.3 613.0 429.6 618.3 C432.0 623.5 433.1 623.3 432.6 630.1 C432.1 637.0 430.6 636.0 427.7 644.0 C424.8 651.9 423.3 655.7 421.7 660.0 M423.7 611.7 C425.3 614.9 427.5 618.3 429.6 623.6 C431.7 628.8 433.2 623.1 431.6 631.5 C430.0 639.9 426.9 645.2 423.7 655.2 C420.5 665.2 418.7 662.7 419.8 669.0 C420.8 675.3 420.3 673.6 427.7 678.9 C435.0 684.2 437.4 687.7 447.4 688.8 C457.4 689.8 456.8 686.5 465.2 682.8 C473.6 679.2 471.1 680.7 479.0 674.9 C486.9 669.1 488.5 668.0 494.8 661.1 C501.1 654.3 500.1 656.1 502.7 649.3 C505.3 642.4 503.4 641.8 504.7 635.4 C506.0 629.1 505.0 629.0 507.7 625.6 C510.3 622.1 511.7 622.1 514.6 622.6 C517.5 623.1 515.4 624.1 518.5 627.5 C521.7 631.0 521.2 632.8 526.4 635.4 C531.7 638.1 529.8 637.1 538.3 637.4 C546.7 637.7 547.5 635.6 558.0 636.4 C568.6 637.2 569.3 637.7 577.8 640.4 C586.2 643.0 585.7 643.4 589.6 646.3 C593.6 649.2 593.6 648.3 592.6 651.2 C591.5 654.1 590.7 652.4 585.7 657.2 C580.7 661.9 578.6 663.2 573.8 669.0 C569.1 674.8 569.0 673.6 567.9 678.9 C566.8 684.2 566.2 683.5 569.9 688.8 C573.6 694.0 574.4 694.7 581.7 698.6 C589.1 702.6 585.9 702.3 597.5 703.6 C609.1 704.9 617.8 703.6 625.2 703.6" stroke="#000" stroke-width="3.5"/><path d="M347.7 638.0 C353.5 640.0 360.8 643.0 369.6 645.7 C378.4 648.3 375.6 648.1 380.6 647.9 C385.6 647.6 385.7 648.7 388.3 644.6 C390.9 640.5 391.7 639.2 390.5 632.5 C389.3 625.7 386.5 626.0 383.9 619.3 C381.3 612.6 380.9 611.6 380.6 607.2 C380.3 602.8 378.1 604.4 382.8 602.8 C387.5 601.2 390.0 600.7 398.2 601.3 C406.4 601.9 406.5 602.4 413.6 605.0 C420.6 607.6 420.2 606.9 424.5 611.0 C428.9 615.1 428.0 615.2 430.0 620.4 C432.1 625.6 433.7 623.5 432.2 630.3 C430.8 637.0 428.1 637.8 424.5 645.7 C421.0 653.6 420.2 652.9 419.1 659.9 C417.9 667.0 417.8 666.2 420.2 672.0 C422.5 677.9 422.0 677.8 427.8 681.9 C433.7 686.0 436.2 685.6 442.1 687.4 C448.0 689.1 447.9 688.2 450.0 688.5 M400.0 600.5 C403.2 601.0 405.5 599.8 411.9 602.5 C418.2 605.1 419.0 606.2 423.7 610.4 C428.4 614.6 427.3 613.0 429.6 618.3 C432.0 623.5 433.1 623.3 432.6 630.1 C432.1 637.0 430.6 636.0 427.7 644.0 C424.8 651.9 423.3 655.7 421.7 660.0 M423.7 611.7 C425.3 614.9 427.5 618.3 429.6 623.6 C431.7 628.8 433.2 623.1 431.6 631.5 C430.0 639.9 426.9 645.2 423.7 655.2 C420.5 665.2 418.7 662.7 419.8 669.0 C420.8 675.3 420.3 673.6 427.7 678.9 C435.0 684.2 437.4 687.7 447.4 688.8 C457.4 689.8 456.8 686.5 465.2 682.8 C473.6 679.2 471.1 680.7 479.0 674.9 C486.9 669.1 488.5 668.0 494.8 661.1 C501.1 654.3 500.1 656.1 502.7 649.3 C505.3 642.4 503.4 641.8 504.7 635.4 C506.0 629.1 505.0 629.0 507.7 625.6 C510.3 622.1 511.7 622.1 514.6 622.6 C517.5 623.1 515.4 624.1 518.5 627.5 C521.7 631.0 521.2 632.8 526.4 635.4 C531.7 638.1 529.8 637.1 538.3 637.4 C546.7 637.7 547.5 635.6 558.0 636.4 C568.6 637.2 569.3 637.7 577.8 640.4 C586.2 643.0 585.7 643.4 589.6 646.3 C593.6 649.2 593.6 648.3 592.6 651.2 C591.5 654.1 590.7 652.4 585.7 657.2 C580.7 661.9 578.6 663.2 573.8 669.0 C569.1 674.8 569.0 673.6 567.9 678.9 C566.8 684.2 566.2 683.5 569.9 688.8 C573.6 694.0 574.4 694.7 581.7 698.6 C589.1 702.6 585.9 702.3 597.5 703.6 C609.1 704.9 617.8 703.6 625.2 703.6" stroke="#fff" stroke-width="1.1"/></g></mask><rect x="84" y="114" width="932" height="660" fill="#9ac8fc" mask="url(#m3)"/>
<path d="M466.3 484.9 L495.3 451.4 L498.9 435.1 L494.4 409.8 L522.4 385.3 L574.9 368.1 L593.0 368.1 L594.9 373.5 L613.0 360.9 L623.8 363.6 L638.3 377.2 L629.3 388.0 L616.6 411.6 L600.3 422.4 L576.7 429.7 L558.6 440.5 L527.9 458.6 L502.5 488.5 L477.2 484.9Z" fill="#8fbdb3"/>
<path d="M487.1 478.9 L503.4 458.6 L507.6 461.9 L493.5 479.5Z" fill="#fff"/>
<path d="M554.1 469.5 L565.9 473.1 L561.4 487.6 L569.5 500.3 L558.6 503.9 L548.7 493.0 L551.4 480.4Z" fill="#dfecf0"/>
<path d="M576.7 460.5 L580.7 465.9 L577.1 473.9 L574.6 467.7Z" fill="#dfecf0"/>
<path d="M538.3 509.6 L550.1 511.6 L546.2 522.5 L536.3 521.5Z" fill="#dfecf0"/>
<path d="M580.4 413.4 L589.4 415.2 L586.7 421.5 L579.5 419.7Z" fill="#dcf5cb"/>
<path d="M589.4 488.5 L600.3 489.8 L599.4 494.0 L589.4 493.0Z" fill="#dcf5cb"/>
<path d="M550.0 356.3 L552.5 356.9 L551.8 359.1Z" fill="#dcf5cb"/>
<path d="M624.2 404.3 L627.1 404.9 L626.0 408.3Z" fill="#dcf5cb"/>
<path d="M478.0 516.5 L489.9 519.5 L483.0 541.2 L473.1 539.3Z" fill="#dcf5cb"/>
<clipPath id="csw"><path d="M494.4 409.8 L522.4 386.2 L551.4 380.8 L574.9 369.9 L587.6 373.5 L600.3 371.7 L613.0 362.7 L623.8 364.5 L636.5 377.2 L629.3 386.2 L613.0 391.6 L614.8 411.6 L600.3 420.6 L576.7 427.9 L558.6 438.7 L544.2 447.8 L527.9 456.8 L509.8 460.5 L500.7 455.0 L504.3 442.3 L495.3 426.0Z"/></clipPath><clipPath id="cra"><path d="M535.1 460.5 L551.4 452.3 L565.9 456.8 L587.6 458.6 L593.0 469.5 L584.0 476.7 L573.1 474.9 L562.3 467.7 L553.2 473.1 L556.8 484.0 L562.3 493.0 L574.9 502.1 L573.1 507.5 L558.6 515.0 L531.5 515.0 L536.9 502.1 L532.4 489.4 L529.7 476.7 L530.6 465.9Z M526.4 521.5 L528.4 509.6 L538.3 498.8 L573.8 501.7 L571.9 509.6 L560.0 519.5 L548.1 527.4 L538.3 525.4Z"/></clipPath><clipPath id="cbf"><path d="M894.9 521.7 L916.6 518.1 L922.7 525.3 L916.6 532.6 L897.3 530.1Z"/></clipPath>
<g clip-path="url(#csw)" fill="none"><path d="M380.0 390.7L584.9 230.7M382.8 394.3L587.6 234.2M385.5 397.8L590.4 237.8M388.3 401.4L593.2 241.3M391.1 404.9L595.9 244.9M393.8 408.5L598.7 248.4M396.6 412.0L601.5 252.0M399.4 415.6L604.3 255.5M402.1 419.1L607.0 259.0M404.9 422.7L609.8 262.6M407.7 426.2L612.6 266.1M410.5 429.8L615.3 269.7M413.2 433.3L618.1 273.2M416.0 436.8L620.9 276.8M418.8 440.4L623.7 280.3M421.5 443.9L626.4 283.9M424.3 447.5L629.2 287.4M427.1 451.0L632.0 291.0M429.9 454.6L634.7 294.5M432.6 458.1L637.5 298.0M435.4 461.7L640.3 301.6M438.2 465.2L643.0 305.1M440.9 468.8L645.8 308.7M443.7 472.3L648.6 312.2M446.5 475.9L651.4 315.8M449.2 479.4L654.1 319.3M452.0 482.9L656.9 322.9M454.8 486.5L659.7 326.4M457.6 490.0L662.4 330.0M460.3 493.6L665.2 333.5M463.1 497.1L668.0 337.1M465.9 500.7L670.8 340.6M468.6 504.2L673.5 344.1M471.4 507.8L676.3 347.7M474.2 511.3L679.1 351.2M477.0 514.9L681.8 354.8M479.7 518.4L684.6 358.3M482.5 522.0L687.4 361.9M485.3 525.5L690.1 365.4M488.0 529.0L692.9 369.0M490.8 532.6L695.7 372.5M493.6 536.1L698.5 376.1M496.3 539.7L701.2 379.6M499.1 543.2L704.0 383.2M501.9 546.8L706.8 386.7M504.7 550.3L709.5 390.2M507.4 553.9L712.3 393.8M510.2 557.4L715.1 397.3M513.0 561.0L717.9 400.9M515.7 564.5L720.6 404.4M518.5 568.0L723.4 408.0M521.3 571.6L726.2 411.5M524.1 575.1L728.9 415.1M526.8 578.7L731.7 418.6M529.6 582.2L734.5 422.2M532.4 585.8L737.2 425.7M535.1 589.3L740.0 429.3M381.1 384.8L541.2 589.6M385.6 381.3L545.7 586.1M390.1 377.7L550.2 582.6M394.6 374.2L554.7 579.1M399.1 370.7L559.2 575.6M403.6 367.2L563.7 572.1M408.1 363.7L568.2 568.6M412.6 360.2L572.7 565.1M417.1 356.7L577.2 561.6M421.6 353.2L581.6 558.1M426.1 349.7L586.1 554.6M430.6 346.2L590.6 551.0M435.0 342.7L595.1 547.5M439.5 339.1L599.6 544.0M444.0 335.6L604.1 540.5M448.5 332.1L608.6 537.0M453.0 328.6L613.1 533.5M457.5 325.1L617.6 530.0M462.0 321.6L622.1 526.5M466.5 318.1L626.6 523.0M471.0 314.6L631.1 519.5M475.5 311.1L635.5 516.0M480.0 307.6L640.0 512.4M484.5 304.0L644.5 508.9M488.9 300.5L649.0 505.4M493.4 297.0L653.5 501.9M497.9 293.5L658.0 498.4M502.4 290.0L662.5 494.9M506.9 286.5L667.0 491.4M511.4 283.0L671.5 487.9M515.9 279.5L676.0 484.4M520.4 276.0L680.5 480.9M524.9 272.5L685.0 477.3M529.4 269.0L689.4 473.8M533.9 265.4L693.9 470.3M538.4 261.9L698.4 466.8M542.8 258.4L702.9 463.3M547.3 254.9L707.4 459.8M551.8 251.4L711.9 456.3M556.3 247.9L716.4 452.8M560.8 244.4L720.9 449.3M565.3 240.9L725.4 445.8M569.8 237.4L729.9 442.3M574.3 233.9L734.4 438.7M578.8 230.4L738.9 435.2" stroke="#fbe88f" stroke-width="2.9"/><path d="M380.0 390.7L584.9 230.7M382.8 394.3L587.6 234.2M385.5 397.8L590.4 237.8M388.3 401.4L593.2 241.3M391.1 404.9L595.9 244.9M393.8 408.5L598.7 248.4M396.6 412.0L601.5 252.0M399.4 415.6L604.3 255.5M402.1 419.1L607.0 259.0M404.9 422.7L609.8 262.6M407.7 426.2L612.6 266.1M410.5 429.8L615.3 269.7M413.2 433.3L618.1 273.2M416.0 436.8L620.9 276.8M418.8 440.4L623.7 280.3M421.5 443.9L626.4 283.9M424.3 447.5L629.2 287.4M427.1 451.0L632.0 291.0M429.9 454.6L634.7 294.5M432.6 458.1L637.5 298.0M435.4 461.7L640.3 301.6M438.2 465.2L643.0 305.1M440.9 468.8L645.8 308.7M443.7 472.3L648.6 312.2M446.5 475.9L651.4 315.8M449.2 479.4L654.1 319.3M452.0 482.9L656.9 322.9M454.8 486.5L659.7 326.4M457.6 490.0L662.4 330.0M460.3 493.6L665.2 333.5M463.1 497.1L668.0 337.1M465.9 500.7L670.8 340.6M468.6 504.2L673.5 344.1M471.4 507.8L676.3 347.7M474.2 511.3L679.1 351.2M477.0 514.9L681.8 354.8M479.7 518.4L684.6 358.3M482.5 522.0L687.4 361.9M485.3 525.5L690.1 365.4M488.0 529.0L692.9 369.0M490.8 532.6L695.7 372.5M493.6 536.1L698.5 376.1M496.3 539.7L701.2 379.6M499.1 543.2L704.0 383.2M501.9 546.8L706.8 386.7M504.7 550.3L709.5 390.2M507.4 553.9L712.3 393.8M510.2 557.4L715.1 397.3M513.0 561.0L717.9 400.9M515.7 564.5L720.6 404.4M518.5 568.0L723.4 408.0M521.3 571.6L726.2 411.5M524.1 575.1L728.9 415.1M526.8 578.7L731.7 418.6M529.6 582.2L734.5 422.2M532.4 585.8L737.2 425.7M535.1 589.3L740.0 429.3M381.1 384.8L541.2 589.6M385.6 381.3L545.7 586.1M390.1 377.7L550.2 582.6M394.6 374.2L554.7 579.1M399.1 370.7L559.2 575.6M403.6 367.2L563.7 572.1M408.1 363.7L568.2 568.6M412.6 360.2L572.7 565.1M417.1 356.7L577.2 561.6M421.6 353.2L581.6 558.1M426.1 349.7L586.1 554.6M430.6 346.2L590.6 551.0M435.0 342.7L595.1 547.5M439.5 339.1L599.6 544.0M444.0 335.6L604.1 540.5M448.5 332.1L608.6 537.0M453.0 328.6L613.1 533.5M457.5 325.1L617.6 530.0M462.0 321.6L622.1 526.5M466.5 318.1L626.6 523.0M471.0 314.6L631.1 519.5M475.5 311.1L635.5 516.0M480.0 307.6L640.0 512.4M484.5 304.0L644.5 508.9M488.9 300.5L649.0 505.4M493.4 297.0L653.5 501.9M497.9 293.5L658.0 498.4M502.4 290.0L662.5 494.9M506.9 286.5L667.0 491.4M511.4 283.0L671.5 487.9M515.9 279.5L676.0 484.4M520.4 276.0L680.5 480.9M524.9 272.5L685.0 477.3M529.4 269.0L689.4 473.8M533.9 265.4L693.9 470.3M538.4 261.9L698.4 466.8M542.8 258.4L702.9 463.3M547.3 254.9L707.4 459.8M551.8 251.4L711.9 456.3M556.3 247.9L716.4 452.8M560.8 244.4L720.9 449.3M565.3 240.9L725.4 445.8M569.8 237.4L729.9 442.3M574.3 233.9L734.4 438.7M578.8 230.4L738.9 435.2" stroke="#b9b9c4" stroke-width="1.25" stroke-dasharray="1.4 1.6"/></g>
<g clip-path="url(#cra)" fill="none"><path d="M452.9 459.0L594.2 383.8M454.6 462.2L595.9 387.1M456.4 465.5L597.6 390.4M458.1 468.8L599.4 393.6M459.8 472.0L601.1 396.9M461.6 475.3L602.8 400.2M463.3 478.6L604.6 403.4M465.0 481.8L606.3 406.7M466.8 485.1L608.1 410.0M468.5 488.4L609.8 413.2M470.3 491.6L611.5 416.5M472.0 494.9L613.3 419.8M473.7 498.2L615.0 423.0M475.5 501.4L616.7 426.3M477.2 504.7L618.5 429.6M478.9 508.0L620.2 432.8M480.7 511.2L622.0 436.1M482.4 514.5L623.7 439.4M484.2 517.8L625.4 442.6M485.9 521.0L627.2 445.9M487.6 524.3L628.9 449.2M489.4 527.6L630.6 452.4M491.1 530.8L632.4 455.7M492.8 534.1L634.1 459.0M494.6 537.4L635.8 462.2M496.3 540.6L637.6 465.5M498.0 543.9L639.3 468.8M499.8 547.2L641.1 472.0M501.5 550.4L642.8 475.3M503.3 553.7L644.5 478.6M505.0 557.0L646.3 481.8M506.7 560.2L648.0 485.1M508.5 563.5L649.7 488.4M510.2 566.8L651.5 491.6M511.9 570.0L653.2 494.9M513.7 573.3L655.0 498.2M515.4 576.6L656.7 501.4M517.2 579.8L658.4 504.7M518.9 583.1L660.2 508.0M520.6 586.4L661.9 511.2M522.4 589.6L663.6 514.5M524.1 592.9L665.4 517.8M525.8 596.2L667.1 521.0M454.1 455.7L529.2 597.0M457.9 453.7L533.0 595.0M461.7 451.7L536.8 592.9M465.5 449.6L540.6 590.9M469.3 447.6L544.4 588.9M473.1 445.6L548.2 586.9M476.9 443.6L552.0 584.9M480.7 441.6L555.8 582.8M484.5 439.6L559.6 580.8M488.3 437.5L563.4 578.8M492.1 435.5L567.2 576.8M495.9 433.5L571.0 574.8M499.7 431.5L574.8 572.7M503.5 429.5L578.6 570.7M507.3 427.4L582.4 568.7M511.1 425.4L586.2 566.7M514.8 423.4L590.0 564.7M518.6 421.4L593.8 562.7M522.4 419.4L597.6 560.6M526.2 417.3L601.4 558.6M530.0 415.3L605.2 556.6M533.8 413.3L608.9 554.6M537.6 411.3L612.7 552.6M541.4 409.3L616.5 550.5M545.2 407.3L620.3 548.5M549.0 405.2L624.1 546.5M552.8 403.2L627.9 544.5M556.6 401.2L631.7 542.5M560.4 399.2L635.5 540.4M564.2 397.2L639.3 538.4M568.0 395.1L643.1 536.4M571.8 393.1L646.9 534.4M575.6 391.1L650.7 532.4M579.4 389.1L654.5 530.4M583.2 387.1L658.3 528.3M587.0 385.0L662.1 526.3M590.8 383.0L665.9 524.3" stroke="#fbe88f" stroke-width="2.9"/><path d="M452.9 459.0L594.2 383.8M454.6 462.2L595.9 387.1M456.4 465.5L597.6 390.4M458.1 468.8L599.4 393.6M459.8 472.0L601.1 396.9M461.6 475.3L602.8 400.2M463.3 478.6L604.6 403.4M465.0 481.8L606.3 406.7M466.8 485.1L608.1 410.0M468.5 488.4L609.8 413.2M470.3 491.6L611.5 416.5M472.0 494.9L613.3 419.8M473.7 498.2L615.0 423.0M475.5 501.4L616.7 426.3M477.2 504.7L618.5 429.6M478.9 508.0L620.2 432.8M480.7 511.2L622.0 436.1M482.4 514.5L623.7 439.4M484.2 517.8L625.4 442.6M485.9 521.0L627.2 445.9M487.6 524.3L628.9 449.2M489.4 527.6L630.6 452.4M491.1 530.8L632.4 455.7M492.8 534.1L634.1 459.0M494.6 537.4L635.8 462.2M496.3 540.6L637.6 465.5M498.0 543.9L639.3 468.8M499.8 547.2L641.1 472.0M501.5 550.4L642.8 475.3M503.3 553.7L644.5 478.6M505.0 557.0L646.3 481.8M506.7 560.2L648.0 485.1M508.5 563.5L649.7 488.4M510.2 566.8L651.5 491.6M511.9 570.0L653.2 494.9M513.7 573.3L655.0 498.2M515.4 576.6L656.7 501.4M517.2 579.8L658.4 504.7M518.9 583.1L660.2 508.0M520.6 586.4L661.9 511.2M522.4 589.6L663.6 514.5M524.1 592.9L665.4 517.8M525.8 596.2L667.1 521.0M454.1 455.7L529.2 597.0M457.9 453.7L533.0 595.0M461.7 451.7L536.8 592.9M465.5 449.6L540.6 590.9M469.3 447.6L544.4 588.9M473.1 445.6L548.2 586.9M476.9 443.6L552.0 584.9M480.7 441.6L555.8 582.8M484.5 439.6L559.6 580.8M488.3 437.5L563.4 578.8M492.1 435.5L567.2 576.8M495.9 433.5L571.0 574.8M499.7 431.5L574.8 572.7M503.5 429.5L578.6 570.7M507.3 427.4L582.4 568.7M511.1 425.4L586.2 566.7M514.8 423.4L590.0 564.7M518.6 421.4L593.8 562.7M522.4 419.4L597.6 560.6M526.2 417.3L601.4 558.6M530.0 415.3L605.2 556.6M533.8 413.3L608.9 554.6M537.6 411.3L612.7 552.6M541.4 409.3L616.5 550.5M545.2 407.3L620.3 548.5M549.0 405.2L624.1 546.5M552.8 403.2L627.9 544.5M556.6 401.2L631.7 542.5M560.4 399.2L635.5 540.4M564.2 397.2L639.3 538.4M568.0 395.1L643.1 536.4M571.8 393.1L646.9 534.4M575.6 391.1L650.7 532.4M579.4 389.1L654.5 530.4M583.2 387.1L658.3 528.3M587.0 385.0L662.1 526.3M590.8 383.0L665.9 524.3" stroke="#b9b9c4" stroke-width="1.25" stroke-dasharray="1.4 1.6"/></g>
<g clip-path="url(#cbf)" fill="none"><path d="M857.6 494.6L935.9 477.9M858.6 498.9L936.8 482.3M859.5 503.2L937.7 486.6M860.4 507.5L938.6 490.9M861.3 511.8L939.6 495.2M862.2 516.1L940.5 499.5M863.1 520.4L941.4 503.8M864.0 524.7L942.3 508.1M865.0 529.0L943.2 512.4M865.9 533.3L944.1 516.7M866.8 537.6L945.0 521.0M867.7 541.9L946.0 525.3M868.6 546.2L946.9 529.6M869.5 550.5L947.8 533.9M870.4 554.8L948.7 538.2M871.4 559.1L949.6 542.5M872.3 563.4L950.5 546.8M873.2 567.7L951.4 551.1M874.1 572.1L952.4 555.4M861.5 493.4L878.1 571.6M870.3 491.5L886.9 569.7M879.1 489.6L895.7 567.9M887.9 487.7L904.5 566.0M896.7 485.9L913.3 564.1M905.5 484.0L922.1 562.3M914.3 482.1L930.9 560.4M923.1 480.3L939.7 558.5M931.9 478.4L948.5 556.6" stroke="#fbe88f" stroke-width="2.9"/><path d="M857.6 494.6L935.9 477.9M858.6 498.9L936.8 482.3M859.5 503.2L937.7 486.6M860.4 507.5L938.6 490.9M861.3 511.8L939.6 495.2M862.2 516.1L940.5 499.5M863.1 520.4L941.4 503.8M864.0 524.7L942.3 508.1M865.0 529.0L943.2 512.4M865.9 533.3L944.1 516.7M866.8 537.6L945.0 521.0M867.7 541.9L946.0 525.3M868.6 546.2L946.9 529.6M869.5 550.5L947.8 533.9M870.4 554.8L948.7 538.2M871.4 559.1L949.6 542.5M872.3 563.4L950.5 546.8M873.2 567.7L951.4 551.1M874.1 572.1L952.4 555.4M861.5 493.4L878.1 571.6M870.3 491.5L886.9 569.7M879.1 489.6L895.7 567.9M887.9 487.7L904.5 566.0M896.7 485.9L913.3 564.1M905.5 484.0L922.1 562.3M914.3 482.1L930.9 560.4M923.1 480.3L939.7 558.5M931.9 478.4L948.5 556.6" stroke="#b9b9c4" stroke-width="1.25" stroke-dasharray="1.4 1.6"/></g>
<path fill="#8fbdb3" d="M511.6 395.3 L521.5 388.9 L525.1 395.3 L532.4 404.3 L527.9 412.5 L521.5 402.5 L517.9 404.3Z M580.4 374.4 L593.0 371.7 L594.9 380.8 L587.6 386.2 L583.1 384.4Z M538.7 417.9 L544.2 415.2 L549.6 421.5 L544.2 425.1Z M548.7 426.0 L555.0 422.4 L559.5 429.7 L553.2 433.3Z M539.6 436.9 L546.9 433.3 L551.4 440.5 L544.2 444.2Z M558.6 418.8 L564.1 417.0 L565.9 421.5 L560.5 423.3Z M593.0 406.1 L602.1 402.5 L603.9 409.8 L594.9 412.5Z M609.3 366.3 L613.9 365.4 L615.7 369.0 L611.2 370.3Z M618.4 379.0 L623.8 377.2 L626.5 384.4 L620.2 385.3Z M565.9 382.6 L574.9 379.9 L576.7 386.2 L568.6 388.9Z M504.3 429.7 L509.8 427.0 L512.5 432.4 L507.0 435.1Z M584.0 420.6 L593.0 418.8 L594.9 424.2 L585.8 426.0Z"/>
<path d="M580.4 413.4 L589.4 415.2 L586.7 421.5 L579.5 419.7Z" fill="#dcf5cb"/>
<g fill="none" stroke-linejoin="round" stroke-linecap="round"><path d="M202.1 209.3 C201.9 210.1 200.7 212.4 201.0 214.2 C201.2 215.9 202.7 217.8 203.4 219.7 C204.0 221.5 202.8 224.0 204.9 225.1 C207.0 226.2 212.6 225.5 215.9 226.2 C219.2 227.0 222.1 228.1 224.7 229.5 C227.2 231.0 229.1 233.6 231.3 235.0 C233.5 236.5 235.3 237.3 237.9 238.3 C240.4 239.3 244.3 240.7 246.6 241.0 C249.0 241.2 250.8 239.1 252.1 240.1 C253.4 241.1 253.2 245.0 254.3 247.1 C255.4 249.2 256.7 251.3 258.7 252.6 C260.7 253.9 263.7 254.7 266.4 254.8 C269.2 254.9 274.5 254.5 275.2 253.3 C275.9 252.0 271.5 249.3 270.8 247.5 C270.1 245.8 269.3 244.2 270.8 242.7 C272.3 241.2 274.1 239.4 279.6 238.8 C285.1 238.1 296.1 238.4 303.7 238.8 C311.4 239.1 320.2 240.0 325.7 241.0 C331.2 241.9 333.9 244.3 336.7 244.5 C339.4 244.7 340.5 241.8 342.2 242.1 C343.8 242.3 343.5 244.8 346.6 246.0 C349.7 247.2 356.6 248.8 360.8 249.3 C365.1 249.9 369.1 249.7 371.8 249.3 C374.6 248.9 375.7 246.7 377.3 246.7 C379.0 246.7 377.5 248.5 381.7 249.3 C385.9 250.1 397.3 250.2 402.6 251.5 C407.9 252.8 410.8 255.5 413.6 257.0 C416.3 258.5 418.7 258.8 419.1 260.3 C419.4 261.7 415.2 264.1 415.8 265.8 C416.3 267.4 420.0 268.5 422.3 270.2 C424.7 271.8 427.8 275.3 430.0 275.7 C432.2 276.0 432.2 272.8 435.5 272.4 C438.9 271.9 447.6 272.9 450.0 273.0 M170.9 304.6 C172.1 305.3 175.4 307.7 178.6 308.6 C181.7 309.6 187.7 310.1 189.5 310.4 M256.1 335.4 C257.4 335.6 260.7 335.3 264.2 336.7 C267.8 338.1 273.0 340.7 277.4 343.7 C281.8 346.7 286.2 351.4 290.6 354.7 C295.0 358.0 299.0 361.7 303.7 363.5 C308.5 365.3 314.4 364.2 319.1 365.7 C323.9 367.2 328.3 370.1 332.3 372.3 C336.3 374.5 338.5 376.9 343.3 378.9 C348.0 380.9 354.3 382.5 360.8 384.4 C367.4 386.2 379.2 389.1 382.8 390.1 M182.9 529.5 C187.0 530.9 198.0 535.9 207.1 538.3 C216.3 540.6 226.9 542.3 237.9 543.7 C248.8 545.2 262.0 547.2 273.0 547.0 C284.0 546.9 291.3 545.8 303.7 542.6 C316.2 539.5 333.0 532.4 347.7 528.4 C362.3 524.3 381.3 520.9 391.6 518.5 C401.8 516.1 404.8 516.8 409.2 514.1 C413.6 511.3 415.0 505.7 418.0 502.0 C420.9 498.4 421.4 494.0 426.7 492.1 C432.1 490.3 446.1 491.2 450.0 491.0 M376.2 390.0 C379.5 390.9 389.0 393.1 396.0 395.5 C402.9 397.9 412.1 400.8 418.0 404.3 C423.8 407.8 425.8 412.5 431.1 416.4 C436.5 420.2 446.9 425.5 450.0 427.3 M439.9 590.1 L450.0 583.3 M326.8 702.3 C329.6 700.7 337.6 696.1 343.3 692.9 C349.0 689.7 356.5 685.9 360.8 683.0 C365.2 680.1 365.2 680.1 369.6 675.3 C374.0 670.5 381.0 662.7 387.2 654.4 C393.4 646.2 401.1 633.0 407.0 625.9 C412.8 618.8 415.2 618.8 422.3 611.6 C429.5 604.5 445.4 587.8 450.0 583.1 M388.3 655.5 C388.8 656.1 390.9 655.7 391.2 658.8 C391.4 661.9 389.4 669.8 389.8 674.2 C390.3 678.6 392.3 682.2 393.8 685.2 C395.3 688.2 398.0 691.2 398.8 692.4 M450.0 272.4 C451.5 271.8 456.2 268.9 458.8 269.1 C461.3 269.3 462.8 272.9 465.4 273.5 C467.9 274.0 471.2 271.1 474.2 272.4 C477.1 273.6 479.7 278.8 482.9 281.1 C486.2 283.5 491.0 284.6 493.9 286.6 C496.9 288.7 497.2 291.8 500.5 293.2 C503.8 294.7 510.8 294.0 513.7 295.4 C516.6 296.9 515.9 300.4 518.1 302.0 C520.3 303.7 524.3 306.4 526.9 305.3 C529.4 304.2 531.6 297.1 533.5 295.4 C535.3 293.7 536.9 293.5 537.9 295.0 C538.8 296.4 539.5 301.2 539.0 304.2 C538.4 307.2 535.8 309.7 534.6 313.0 C533.3 316.3 532.5 321.4 531.3 324.0 C530.0 326.5 526.9 326.5 526.9 328.4 C526.9 330.2 528.7 333.5 531.3 335.0 C533.8 336.4 539.5 337.9 542.2 337.2 C545.0 336.4 547.0 333.1 547.7 330.6 C548.5 328.0 546.6 324.7 546.6 321.8 C546.6 318.9 546.6 315.7 547.7 313.0 C548.8 310.3 551.2 307.0 553.2 305.3 C555.2 303.7 558.0 302.9 559.8 303.1 C561.6 303.3 562.0 306.0 564.2 306.4 C566.4 306.8 570.1 306.0 573.0 305.3 C575.9 304.6 579.8 303.3 581.8 302.0 C583.8 300.7 585.6 299.5 585.1 297.6 C584.5 295.8 579.6 293.2 578.5 291.0 C577.4 288.8 579.8 286.6 578.5 284.4 C577.2 282.2 571.2 279.9 570.8 277.9 C570.4 275.8 574.5 274.2 576.3 272.4 C578.1 270.5 580.9 267.8 581.8 266.9 M450.0 293.2 C452.2 293.6 460.1 293.6 463.2 295.4 C466.3 297.3 466.8 299.8 468.7 304.2 C470.5 308.6 473.4 315.6 474.2 321.8 C474.9 328.0 472.0 335.3 473.1 341.5 C474.2 347.8 477.6 353.3 480.7 359.1 C483.9 365.0 488.4 372.3 491.7 376.7 C495.0 381.1 497.6 383.8 500.5 385.5 C503.4 387.1 506.7 387.7 509.3 386.6 C511.9 385.5 511.5 382.7 515.9 378.9 C520.3 375.0 528.3 367.0 535.7 363.5 C543.0 360.0 554.3 358.0 559.8 358.0 C565.3 358.0 566.0 361.1 568.6 363.5 C571.2 365.9 574.1 370.8 575.2 372.3 M450.0 390.1 C452.2 387.9 459.2 379.7 463.2 376.7 C467.2 373.7 470.9 373.8 474.2 372.3 C477.5 370.8 481.5 368.6 482.9 367.9 M553.2 308.6 C553.0 310.8 553.2 317.8 552.1 321.8 C551.0 325.8 549.0 329.5 546.6 332.8 C544.3 336.1 539.7 336.4 537.9 341.5 C536.0 346.7 536.0 359.9 535.7 363.5 M553.2 315.2 L577.4 316.3 M557.6 311.9 L562.0 304.2 M568.6 311.9 C570.4 313.5 576.8 318.7 579.6 321.8 C582.3 324.9 584.9 328.0 585.1 330.6 C585.3 333.1 580.9 335.0 580.7 337.2 C580.5 339.4 582.0 342.3 584.0 343.7 C586.0 345.2 590.7 346.7 592.8 345.9 C594.8 345.2 595.7 341.9 596.1 339.4 C596.4 336.8 594.0 333.1 595.0 330.6 C595.9 328.0 599.2 326.0 601.5 324.0 C603.9 322.0 607.8 320.3 609.2 318.5 C610.7 316.7 608.7 313.9 610.3 313.0 C612.0 312.1 615.8 313.7 619.1 313.0 C622.4 312.3 626.8 310.4 630.1 308.6 C633.4 306.8 637.8 305.3 638.9 302.0 C640.0 298.7 636.0 292.5 636.7 288.8 C637.4 285.2 639.3 281.5 643.3 280.1 C647.3 278.6 654.3 280.4 660.8 280.1 C667.4 279.7 675.1 278.0 682.8 277.9 C690.5 277.7 700.8 277.7 707.0 279.0 C713.2 280.2 716.1 283.9 720.2 285.5 C724.2 287.2 726.2 288.5 731.1 288.8 C736.1 289.2 746.9 287.9 750.0 287.7 M612.5 313.0 C612.9 310.1 613.4 299.8 614.7 295.4 C616.0 291.0 618.4 288.4 620.2 286.6 C622.0 284.9 624.8 285.2 625.7 284.9 M612.5 316.3 C613.6 318.7 618.2 326.0 619.1 330.6 C620.0 335.1 619.1 340.1 618.0 343.7 C616.9 347.4 613.3 349.2 612.5 352.5 C611.8 355.8 611.8 362.0 613.6 363.5 C615.5 365.0 618.9 359.9 623.5 361.3 C628.1 362.8 638.2 369.0 641.1 372.3 C644.0 375.6 641.1 379.6 641.1 381.1 M616.9 354.7 C622.0 354.2 638.9 352.7 647.7 351.4 C656.5 350.2 663.8 346.7 669.6 347.0 C675.5 347.4 678.8 350.5 682.8 353.6 C686.8 356.7 691.2 360.8 693.8 365.7 C696.4 370.7 697.8 379.2 698.2 383.3 C698.6 387.3 696.4 389.0 696.0 390.1 M652.1 351.4 C651.5 352.7 648.6 356.9 648.8 359.1 C649.0 361.3 652.4 363.7 653.2 364.6 M641.1 299.8 C642.5 302.0 647.3 309.3 649.9 313.0 C652.4 316.7 655.5 319.4 656.5 321.8 C657.4 324.2 654.6 327.3 655.4 327.3 C656.1 327.3 659.4 324.2 660.8 321.8 C662.3 319.4 662.7 313.9 664.1 313.0 C665.6 312.1 666.9 316.8 669.6 316.3 C672.4 315.7 676.2 311.0 680.6 309.7 C685.0 308.4 691.4 308.1 696.0 308.6 C700.6 309.2 704.0 312.8 708.1 313.0 C712.1 313.2 717.2 310.8 720.2 309.7 C723.1 308.6 724.5 308.2 725.6 306.4 C726.7 304.6 725.1 299.5 726.7 298.7 C728.4 298.0 731.6 301.3 735.5 302.0 C739.4 302.7 747.6 302.9 750.0 303.1 M732.2 209.8 L750.0 213.7 M711.4 372.3 L727.8 373.4 M700.4 390.1 C701.5 388.6 705.1 384.0 707.0 381.1 C708.8 378.1 710.6 373.8 711.4 372.3 M582.9 353.6 C583.6 355.6 586.7 362.2 587.3 365.7 C587.8 369.2 586.4 373.0 586.2 374.5 M750.0 214.2 C750.5 214.5 752.6 214.9 753.3 216.4 C754.0 217.8 751.3 220.7 754.4 222.9 C757.5 225.1 767.9 227.0 772.0 229.5 C776.0 232.1 777.1 236.3 778.6 238.3 C780.0 240.3 777.5 240.9 780.7 241.6 C784.0 242.3 794.3 241.2 798.3 242.7 C802.3 244.2 800.9 248.6 804.9 250.4 C808.9 252.2 819.4 251.7 822.5 253.7 C825.6 255.7 823.9 259.2 823.6 262.5 C823.2 265.8 822.7 271.3 820.3 273.5 C817.9 275.7 811.1 274.6 809.3 275.7 C807.5 276.8 807.1 278.6 809.3 280.1 C811.5 281.5 817.2 282.8 822.5 284.4 C827.8 286.1 838.2 288.5 841.1 289.9 C844.1 291.4 845.7 292.0 840.1 293.2 C834.4 294.4 814.8 295.7 807.1 297.2 C799.4 298.6 799.8 300.5 793.9 302.0 C788.1 303.6 779.3 306.2 772.0 306.4 C764.6 306.6 753.7 303.7 750.0 303.1 M750.0 287.7 C751.5 288.7 756.6 291.4 758.8 293.2 C761.0 295.1 761.0 296.5 763.2 298.7 C765.4 300.9 770.5 305.1 772.0 306.4 M817.0 372.3 C816.6 370.8 814.2 365.7 814.8 363.5 C815.3 361.3 817.4 360.9 820.3 359.1 C823.2 357.3 830.3 353.6 832.4 352.5 M775.3 365.7 L773.1 390.1 M620.0 416.2 C622.2 416.6 628.4 417.9 633.2 418.4 C637.9 419.0 642.7 419.0 648.6 419.5 C654.4 420.1 662.1 420.4 668.3 421.7 C674.5 423.0 675.6 424.3 685.9 427.2 C696.1 430.2 718.8 436.2 729.8 439.3 C740.8 442.4 740.8 443.0 751.8 445.9 C762.8 448.8 781.1 452.8 795.7 456.9 C810.4 460.9 825.7 465.7 839.6 470.1 C853.5 474.4 868.2 477.7 879.2 483.2 C890.2 488.7 901.1 499.7 905.5 503.0 M620.0 419.5 L648.6 420.6 M648.6 420.6 C648.2 421.7 648.0 425.2 646.4 427.2 C644.7 429.2 640.1 430.3 638.7 432.7 C637.2 435.1 636.3 437.5 637.6 441.5 C638.9 445.5 643.1 451.4 646.4 456.9 C649.7 462.4 653.3 469.3 657.3 474.4 C661.4 479.6 666.9 484.1 670.5 487.6 C674.2 491.1 677.8 494.0 679.3 495.3 M679.3 498.6 C681.5 500.1 687.7 504.3 692.5 507.4 C697.2 510.5 701.6 513.2 707.9 517.3 C714.1 521.3 728.7 528.1 729.8 531.5 C730.9 535.0 719.9 536.1 714.4 538.1 C709.0 540.2 701.6 541.8 696.9 543.6 C692.1 545.5 688.3 547.1 685.9 549.1 C683.5 551.1 683.0 553.9 682.6 555.7 C682.2 557.5 683.5 559.4 683.7 560.1 M672.7 503.0 C671.6 504.5 666.5 508.9 666.1 511.8 C665.8 514.7 668.3 518.0 670.5 520.6 C672.7 523.1 677.1 525.7 679.3 527.2 C681.5 528.6 683.0 529.0 683.7 529.4 M683.7 560.1 C681.9 559.7 677.1 557.2 672.7 557.9 C668.3 558.6 661.7 562.7 657.3 564.5 C652.9 566.3 650.4 567.8 646.4 568.9 C642.3 570.0 635.4 570.7 633.2 571.1 M646.4 568.9 L647.5 580.1 M694.7 580.1 C694.3 579.0 691.4 575.5 692.5 573.3 C693.6 571.0 699.3 569.3 701.3 566.7 C703.3 564.1 704.0 559.4 704.6 557.9 M696.9 380.0 C696.5 383.7 695.8 395.7 694.7 402.0 C693.6 408.2 691.7 413.1 690.3 417.3 C688.8 421.5 686.6 425.6 685.9 427.2 M718.8 382.2 C720.3 383.7 725.8 387.3 727.6 391.0 C729.5 394.6 727.8 400.1 729.8 404.2 C731.8 408.2 739.0 410.7 739.7 415.1 C740.4 419.5 735.9 426.5 734.2 430.5 C732.6 434.5 730.5 437.8 729.8 439.3 M773.7 380.0 C773.7 383.7 774.1 396.1 773.7 402.0 C773.4 407.8 773.7 411.5 771.5 415.1 C769.4 418.8 763.1 420.3 760.6 423.9 C758.0 427.6 757.6 433.4 756.2 437.1 C754.7 440.8 752.5 444.4 751.8 445.9 M765.0 408.6 C766.4 409.3 772.6 411.8 773.7 412.9 C774.8 414.0 770.3 412.9 771.5 415.1 C772.8 417.3 779.8 424.3 781.4 426.1 M749.6 450.3 C751.4 452.1 757.3 458.0 760.6 461.3 C763.9 464.6 765.0 468.8 769.4 470.1 C773.7 471.3 782.9 468.6 786.9 469.0 C790.9 469.3 792.4 471.7 793.5 472.2 M786.9 393.2 C787.3 395.7 787.7 404.5 789.1 408.6 C790.6 412.6 790.9 413.7 795.7 417.3 C800.5 421.0 811.4 426.9 817.7 430.5 C823.9 434.2 827.6 436.7 833.0 439.3 C838.5 441.9 845.1 443.3 850.6 445.9 C856.1 448.5 862.0 452.1 866.0 454.7 C870.0 457.2 871.8 459.8 874.8 461.3 C877.7 462.7 879.9 464.2 883.6 463.5 C887.2 462.7 893.1 459.8 896.7 456.9 C900.4 453.9 902.6 449.6 905.5 445.9 C908.5 442.2 912.8 436.7 914.3 434.9 M808.9 521.7 C811.4 522.4 818.4 526.6 824.3 526.1 C830.1 525.5 837.8 521.1 844.0 518.4 C850.3 515.6 856.1 513.6 861.6 509.6 C867.1 505.6 873.3 498.6 877.0 494.2 C880.6 489.8 882.5 485.1 883.6 483.2 M820.0 357.4 C821.8 356.4 828.5 351.8 830.9 351.4 C833.3 351.0 830.7 354.2 834.5 355.0 C838.3 355.8 848.6 356.8 853.8 356.2 C859.0 355.6 861.9 351.2 865.9 351.4 C869.9 351.6 872.3 354.2 878.0 357.4 C883.6 360.7 893.3 366.9 899.7 370.7 C906.2 374.5 912.6 377.2 916.6 380.4 C920.6 383.6 922.7 384.0 923.9 390.0 C925.1 396.1 925.1 409.4 923.9 416.6 C922.7 423.9 919.8 428.3 916.6 433.5 C913.4 438.8 908.6 443.8 904.5 448.0 C900.5 452.2 896.1 456.1 892.5 458.9 C888.8 461.7 885.6 464.3 882.8 464.9 C880.0 465.5 877.6 463.7 875.6 462.5 C873.5 461.3 870.3 459.5 870.7 457.7 C871.1 455.9 876.8 452.6 878.0 451.6 M864.7 342.9 L865.9 351.4 M898.5 352.6 C900.3 352.3 905.1 351.4 909.4 350.9 C913.6 350.4 921.4 349.7 923.9 349.5 M923.9 341.3 L923.9 343.2 M899.7 370.7 C901.7 370.5 907.8 371.1 911.8 369.5 C915.8 367.9 921.9 362.5 923.9 361.1 M881.6 376.8 C883.0 379.0 888.2 385.8 890.0 390.0 C891.9 394.3 890.2 398.9 892.5 402.1 C894.7 405.3 901.5 406.6 903.3 409.4 C905.1 412.2 905.1 414.6 903.3 419.0 C901.5 423.5 896.3 430.7 892.5 435.9 C888.6 441.2 882.8 447.8 880.4 450.4 C878.0 453.1 878.4 451.4 878.0 451.6 M881.6 403.3 C881.4 405.5 881.0 408.6 880.4 416.6 C879.8 424.7 878.6 444.0 878.0 451.6 C877.4 459.3 877.0 460.7 876.8 462.5 M880.4 409.4 L903.3 410.6 M880.4 417.8 L921.4 419.5 M820.0 432.3 C822.8 433.5 830.9 436.5 836.9 439.6 C842.9 442.6 850.4 447.0 856.2 450.4 C862.1 453.9 867.9 457.7 871.9 460.1 C876.0 462.5 877.0 465.1 880.4 464.9 C883.8 464.7 890.5 459.9 892.5 458.9 M882.8 464.9 C882.4 467.3 881.8 473.8 880.4 479.4 C879.0 485.1 875.4 495.5 874.3 498.7 M894.9 458.9 C895.7 460.7 898.1 466.1 899.7 469.8 C901.3 473.4 901.3 477.6 904.5 480.6 C907.8 483.6 916.6 486.7 919.0 487.9 M903.3 471.0 L913.0 472.2 M904.5 479.4 L913.0 480.6 M820.0 464.9 C824.0 466.1 834.5 469.2 844.2 472.2 C853.8 475.2 868.7 478.6 878.0 483.0 C887.2 487.5 894.1 494.9 899.7 498.7 C905.3 502.6 909.8 504.8 911.8 506.0 M820.0 527.7 C823.2 526.5 832.9 523.3 839.3 520.5 C845.8 517.7 852.8 514.4 858.6 510.8 C864.5 507.2 870.9 502.4 874.3 498.7 C877.8 495.1 878.4 490.7 879.2 489.1 M923.9 508.4 C922.7 511.2 919.0 520.0 916.6 525.3 C914.2 530.6 910.6 537.6 909.4 540.0 M400.0 636.0 C404.3 631.4 414.5 620.2 425.7 608.4 C436.9 596.5 457.6 575.1 467.2 564.9 C476.7 554.7 479.3 551.4 483.0 547.2 C486.6 542.9 486.9 544.5 488.9 539.3 C490.9 534.0 491.9 524.1 494.8 515.6 C497.8 507.0 503.7 493.8 506.7 487.9 C509.6 482.0 511.6 481.3 512.6 480.0 M452.3 565.3 C454.5 563.3 461.1 557.8 465.2 553.1 C469.3 548.4 474.1 542.9 477.0 537.3 C480.0 531.7 480.0 526.4 483.0 519.5 C485.9 512.6 491.5 502.4 494.8 495.8 C498.1 489.2 501.4 482.6 502.7 480.0 M400.0 517.5 C401.6 516.9 406.9 516.5 409.9 513.6 C412.8 510.6 415.1 503.4 417.8 499.8 C420.4 496.1 422.1 493.5 425.7 491.9 C429.3 490.2 433.9 490.2 439.5 489.9 C445.1 489.5 454.7 490.5 459.3 489.9 C463.9 489.2 464.5 487.6 467.2 485.9 C469.8 484.3 473.7 481.0 475.1 480.0 M467.2 485.9 C467.8 487.6 470.8 492.5 471.1 495.8 C471.4 499.1 469.5 504.0 469.1 505.7 M475.1 485.9 C476.4 487.6 480.0 492.8 483.0 495.8 C485.9 498.8 491.2 502.4 492.8 503.7 M488.9 549.1 C490.2 550.8 495.1 556.0 496.8 559.0 C498.4 562.0 498.6 560.3 498.8 566.9 C498.9 573.5 498.4 590.6 497.8 598.5 C497.1 606.4 496.3 609.1 494.8 614.3 C493.3 619.6 490.7 626.5 488.9 630.1 C487.1 633.7 484.4 633.4 484.0 636.0 C483.5 638.7 484.4 643.0 485.9 645.9 C487.4 648.9 491.0 653.5 492.8 653.8 C494.7 654.2 496.1 651.9 496.8 647.9 C497.4 644.0 495.8 635.1 496.8 630.1 C497.8 625.2 500.4 620.7 502.7 618.3 C505.0 615.8 507.3 615.3 510.6 615.3 C513.9 615.3 519.8 616.5 522.5 618.3 C525.1 620.1 524.4 623.9 526.4 626.2 C528.4 628.5 529.1 631.1 534.3 632.1 C539.6 633.1 550.8 631.6 558.0 632.1 C565.3 632.6 572.5 634.1 577.8 635.1 C583.0 636.0 586.3 637.2 589.6 638.0 C592.9 638.8 596.2 639.7 597.5 640.0 M494.8 576.8 C496.1 576.8 500.4 575.1 502.7 576.8 C505.0 578.4 506.3 584.2 508.6 586.7 C510.9 589.1 513.3 591.1 516.5 591.6 C519.8 592.1 525.8 588.8 528.4 589.6 C531.0 590.5 532.3 594.1 532.3 596.5 C532.3 599.0 530.2 602.0 528.4 604.4 C526.6 606.9 521.5 609.4 521.5 611.4 C521.5 613.3 527.2 613.8 528.4 616.3 C529.5 618.8 528.4 624.5 528.4 626.2 M603.5 638.0 C605.8 634.7 611.2 626.2 617.3 618.3 C623.4 610.4 636.2 595.2 640.0 590.6 M618.3 570.9 C619.1 572.2 620.7 576.1 623.2 578.8 C625.7 581.4 630.3 584.9 633.1 586.7 C635.9 588.5 638.8 589.1 640.0 589.6 M631.1 571.9 L640.0 569.9 M577.8 480.0 C579.8 481.0 585.0 484.3 589.6 485.9 C594.2 487.6 601.3 487.7 605.4 489.9 C609.5 492.0 612.8 497.3 614.3 498.8 M489.9 545.2 L494.8 535.3 M579.8 636.0 C581.1 634.7 585.0 629.8 587.7 628.1 C590.3 626.5 593.3 625.8 595.6 626.2 C597.9 626.5 600.2 628.1 601.5 630.1 C602.8 632.1 603.1 636.7 603.5 638.0 M589.6 638.0 L595.6 627.2 M601.5 655.2 C600.2 656.2 597.5 658.1 593.6 661.1 C589.6 664.1 580.4 671.0 577.8 673.0 M605.4 657.2 C605.8 659.1 606.7 665.7 607.4 669.0 C608.1 672.3 609.1 675.6 609.4 676.9 M594.6 671.0 C595.7 672.0 597.7 676.0 601.5 676.9 C605.3 677.8 610.9 677.3 617.3 676.5 C623.7 675.7 636.2 672.7 640.0 672.0 M597.5 657.2 C596.2 659.1 590.1 666.7 589.6 669.0 C589.1 671.3 593.7 670.7 594.6 671.0 M620.0 617.1 C623.5 612.5 636.3 597.3 640.9 589.7 C645.4 582.0 646.2 575.2 647.5 571.0 C648.7 566.8 648.4 565.5 648.6 564.4 M631.0 571.0 C633.7 570.6 642.3 570.6 647.5 568.8 C652.6 567.0 659.4 561.5 661.7 560.0 M620.0 571.0 C620.7 572.4 622.2 577.4 624.4 579.8 C626.6 582.1 630.4 583.8 633.2 585.3 C635.9 586.7 639.6 588.0 640.9 588.6 M704.6 560.0 C702.5 561.6 694.1 567.0 692.5 569.9 C690.8 572.8 692.8 574.8 694.7 577.6 C696.5 580.3 700.9 583.1 703.5 586.4 C706.0 589.7 707.9 593.3 710.1 597.3 C712.2 601.4 713.7 607.0 716.6 610.5 C719.6 614.0 725.8 614.5 727.6 618.2 C729.5 621.9 728.4 627.9 727.6 632.5 C726.9 637.1 725.6 641.8 723.2 645.7 C720.8 649.5 715.2 652.2 713.3 655.5 C711.5 658.8 711.5 662.3 712.2 665.4 C713.0 668.5 717.0 671.5 717.7 674.2 C718.5 677.0 718.3 680.1 716.6 681.9 C715.0 683.7 711.5 683.5 707.9 685.2 C704.2 686.8 698.0 690.7 694.7 691.8 C691.4 692.9 691.4 694.3 688.1 691.8 C684.8 689.2 679.9 681.5 674.9 676.4 C670.0 671.3 662.8 662.5 658.4 661.0 C654.0 659.6 652.8 665.6 648.6 667.6 C644.3 669.6 637.9 671.8 633.2 673.1 C628.4 674.4 622.2 674.9 620.0 675.3 M902.2 560.0 C902.0 562.2 903.1 567.7 901.1 573.2 C899.1 578.7 894.5 585.6 890.2 592.9 C885.8 600.3 879.9 609.1 874.8 617.1 C869.7 625.2 864.2 634.3 859.4 641.3 C854.6 648.2 850.6 653.0 846.2 658.8 C841.8 664.7 836.3 671.6 833.0 676.4 C829.8 681.2 829.4 684.5 826.5 687.4 C823.5 690.3 819.1 693.4 815.5 694.0 C811.8 694.5 807.8 690.7 804.5 690.7 C801.2 690.7 798.3 693.8 795.7 694.0 C793.1 694.2 793.0 691.0 789.1 691.8 C785.3 692.6 775.4 697.6 772.6 698.8 M683.8 566.6 C681.4 565.2 674.8 557.9 669.5 557.9 C664.2 557.9 658.2 564.3 652.0 566.6 C645.7 569.0 635.5 571.2 632.2 572.1 M647.6 568.8 C647.4 570.7 647.9 576.2 646.5 579.8 C645.0 583.5 641.5 587.1 638.8 590.8 C636.0 594.5 631.5 600.0 630.0 601.8 M630.0 584.2 L639.9 589.7 M924.3 509.5 C922.5 512.8 917.0 522.0 913.3 529.3 C909.7 536.6 904.5 546.9 902.3 553.5 C900.2 560.1 902.3 562.2 900.2 568.8 C898.0 575.4 892.8 586.0 889.2 593.0 C885.5 600.0 881.1 605.8 878.2 610.6 C875.3 615.3 872.7 619.7 871.6 621.5 M475.3 350.0 C476.3 351.8 478.7 357.5 480.8 360.9 C482.9 364.2 485.3 366.3 488.0 369.9 C490.7 373.5 493.8 379.9 497.1 382.6 C500.4 385.3 505.2 385.6 507.9 386.2 C510.7 386.8 512.5 386.2 513.4 386.2 M535.1 350.0 C535.4 351.2 537.2 355.0 536.9 357.2 C536.6 359.5 536.3 360.9 533.3 363.6 C530.3 366.3 522.7 370.4 518.8 373.5 C514.9 376.7 511.3 381.1 509.8 382.6 M533.3 363.6 C536.3 362.7 547.2 359.2 551.4 358.1 C555.6 357.1 556.2 356.6 558.6 357.2 C561.1 357.8 563.2 359.8 565.9 361.8 C568.6 363.7 573.4 367.8 574.9 369.0 M482.6 368.1 C481.1 369.3 476.0 372.3 473.5 375.3 C471.1 378.4 469.5 381.7 468.1 386.2 C466.7 390.7 466.6 396.5 465.4 402.5 C464.2 408.5 463.1 418.2 460.9 422.4 C458.6 426.7 453.3 427.0 451.8 427.9 M452.7 398.0 L466.3 400.7 M450.0 428.8 C453.0 428.5 462.1 427.9 468.1 427.0 C474.1 426.0 481.4 423.8 486.2 423.3 C491.0 422.9 495.3 424.1 497.1 424.2 M468.1 404.3 C469.6 407.6 472.0 418.8 477.2 424.2 C482.3 429.7 495.3 434.8 498.9 436.9 M483.5 414.3 L479.0 421.5 M450.0 431.5 C450.6 433.0 453.3 437.2 453.6 440.5 C453.9 443.9 451.2 447.8 451.8 451.4 C452.4 455.0 454.5 458.3 457.2 462.3 C460.0 466.2 465.4 471.9 468.1 474.9 C470.8 478.0 472.6 479.5 473.5 480.4 M473.5 480.4 L493.5 484.9 M471.7 482.2 C471.3 486.1 468.9 501.6 469.0 505.7 C469.2 509.8 472.0 506.5 472.6 506.6 M477.2 487.6 L478.1 494.9 M479.0 484.0 C480.2 485.8 483.5 491.5 486.2 494.9 C488.9 498.2 493.8 502.4 495.3 503.9 M497.1 515.0 C498.0 512.5 498.9 506.7 502.5 500.3 C506.1 493.9 511.9 484.3 518.8 476.7 C525.7 469.2 537.5 460.5 544.2 455.0 C550.8 449.6 556.2 446.0 558.6 444.2 M488.9 515.0 C490.0 512.5 491.8 506.1 495.3 500.3 C498.7 494.5 504.0 487.0 509.8 480.4 C515.5 473.7 526.4 463.8 529.7 460.5 M558.6 444.2 C561.7 441.7 569.2 433.3 576.7 429.7 C584.3 426.0 594.9 424.1 603.9 422.4 C613.0 420.8 623.5 420.3 631.1 419.7 C638.6 419.1 642.7 418.7 649.2 418.8 C655.7 419.0 666.5 420.3 670.0 420.6 M618.4 413.4 C620.5 414.0 625.9 416.1 631.1 417.0 C636.2 417.9 646.2 418.5 649.2 418.8 M584.0 353.6 C584.6 355.4 586.9 362.1 587.6 364.5 C588.4 366.9 588.4 367.5 588.5 368.1 M611.2 359.1 L613.0 350.0 M616.6 357.2 C619.0 356.6 625.6 354.5 631.1 353.6 C636.5 352.7 642.7 352.4 649.2 351.8 C655.7 351.2 666.5 350.3 670.0 350.0 M651.0 351.8 C650.7 353.0 648.9 357.1 649.2 359.1 C649.5 361.0 652.2 362.8 652.8 363.6 M623.8 364.5 C626.5 366.0 637.7 369.9 640.1 373.5 C642.5 377.2 639.8 381.1 638.3 386.2 C636.8 391.3 634.4 399.8 631.1 404.3 C627.8 408.8 620.5 411.9 618.4 413.4 M649.2 418.8 C647.1 420.9 638.3 427.3 636.5 431.5 C634.7 435.7 636.2 438.4 638.3 444.2 C640.4 449.9 645.0 459.8 649.2 465.9 C653.4 471.9 660.2 476.7 663.7 480.4 C667.1 484.0 668.9 486.4 670.0 487.6 M574.9 474.9 C577.1 476.4 583.4 482.0 587.6 484.0 C591.8 486.0 595.9 484.3 600.3 486.7 C604.7 489.1 611.6 496.5 613.9 498.5" stroke="#fbe88f" stroke-width="2.9"/><path d="M202.1 209.3 C201.9 210.1 200.7 212.4 201.0 214.2 C201.2 215.9 202.7 217.8 203.4 219.7 C204.0 221.5 202.8 224.0 204.9 225.1 C207.0 226.2 212.6 225.5 215.9 226.2 C219.2 227.0 222.1 228.1 224.7 229.5 C227.2 231.0 229.1 233.6 231.3 235.0 C233.5 236.5 235.3 237.3 237.9 238.3 C240.4 239.3 244.3 240.7 246.6 241.0 C249.0 241.2 250.8 239.1 252.1 240.1 C253.4 241.1 253.2 245.0 254.3 247.1 C255.4 249.2 256.7 251.3 258.7 252.6 C260.7 253.9 263.7 254.7 266.4 254.8 C269.2 254.9 274.5 254.5 275.2 253.3 C275.9 252.0 271.5 249.3 270.8 247.5 C270.1 245.8 269.3 244.2 270.8 242.7 C272.3 241.2 274.1 239.4 279.6 238.8 C285.1 238.1 296.1 238.4 303.7 238.8 C311.4 239.1 320.2 240.0 325.7 241.0 C331.2 241.9 333.9 244.3 336.7 244.5 C339.4 244.7 340.5 241.8 342.2 242.1 C343.8 242.3 343.5 244.8 346.6 246.0 C349.7 247.2 356.6 248.8 360.8 249.3 C365.1 249.9 369.1 249.7 371.8 249.3 C374.6 248.9 375.7 246.7 377.3 246.7 C379.0 246.7 377.5 248.5 381.7 249.3 C385.9 250.1 397.3 250.2 402.6 251.5 C407.9 252.8 410.8 255.5 413.6 257.0 C416.3 258.5 418.7 258.8 419.1 260.3 C419.4 261.7 415.2 264.1 415.8 265.8 C416.3 267.4 420.0 268.5 422.3 270.2 C424.7 271.8 427.8 275.3 430.0 275.7 C432.2 276.0 432.2 272.8 435.5 272.4 C438.9 271.9 447.6 272.9 450.0 273.0 M170.9 304.6 C172.1 305.3 175.4 307.7 178.6 308.6 C181.7 309.6 187.7 310.1 189.5 310.4 M256.1 335.4 C257.4 335.6 260.7 335.3 264.2 336.7 C267.8 338.1 273.0 340.7 277.4 343.7 C281.8 346.7 286.2 351.4 290.6 354.7 C295.0 358.0 299.0 361.7 303.7 363.5 C308.5 365.3 314.4 364.2 319.1 365.7 C323.9 367.2 328.3 370.1 332.3 372.3 C336.3 374.5 338.5 376.9 343.3 378.9 C348.0 380.9 354.3 382.5 360.8 384.4 C367.4 386.2 379.2 389.1 382.8 390.1 M182.9 529.5 C187.0 530.9 198.0 535.9 207.1 538.3 C216.3 540.6 226.9 542.3 237.9 543.7 C248.8 545.2 262.0 547.2 273.0 547.0 C284.0 546.9 291.3 545.8 303.7 542.6 C316.2 539.5 333.0 532.4 347.7 528.4 C362.3 524.3 381.3 520.9 391.6 518.5 C401.8 516.1 404.8 516.8 409.2 514.1 C413.6 511.3 415.0 505.7 418.0 502.0 C420.9 498.4 421.4 494.0 426.7 492.1 C432.1 490.3 446.1 491.2 450.0 491.0 M376.2 390.0 C379.5 390.9 389.0 393.1 396.0 395.5 C402.9 397.9 412.1 400.8 418.0 404.3 C423.8 407.8 425.8 412.5 431.1 416.4 C436.5 420.2 446.9 425.5 450.0 427.3 M439.9 590.1 L450.0 583.3 M326.8 702.3 C329.6 700.7 337.6 696.1 343.3 692.9 C349.0 689.7 356.5 685.9 360.8 683.0 C365.2 680.1 365.2 680.1 369.6 675.3 C374.0 670.5 381.0 662.7 387.2 654.4 C393.4 646.2 401.1 633.0 407.0 625.9 C412.8 618.8 415.2 618.8 422.3 611.6 C429.5 604.5 445.4 587.8 450.0 583.1 M388.3 655.5 C388.8 656.1 390.9 655.7 391.2 658.8 C391.4 661.9 389.4 669.8 389.8 674.2 C390.3 678.6 392.3 682.2 393.8 685.2 C395.3 688.2 398.0 691.2 398.8 692.4 M450.0 272.4 C451.5 271.8 456.2 268.9 458.8 269.1 C461.3 269.3 462.8 272.9 465.4 273.5 C467.9 274.0 471.2 271.1 474.2 272.4 C477.1 273.6 479.7 278.8 482.9 281.1 C486.2 283.5 491.0 284.6 493.9 286.6 C496.9 288.7 497.2 291.8 500.5 293.2 C503.8 294.7 510.8 294.0 513.7 295.4 C516.6 296.9 515.9 300.4 518.1 302.0 C520.3 303.7 524.3 306.4 526.9 305.3 C529.4 304.2 531.6 297.1 533.5 295.4 C535.3 293.7 536.9 293.5 537.9 295.0 C538.8 296.4 539.5 301.2 539.0 304.2 C538.4 307.2 535.8 309.7 534.6 313.0 C533.3 316.3 532.5 321.4 531.3 324.0 C530.0 326.5 526.9 326.5 526.9 328.4 C526.9 330.2 528.7 333.5 531.3 335.0 C533.8 336.4 539.5 337.9 542.2 337.2 C545.0 336.4 547.0 333.1 547.7 330.6 C548.5 328.0 546.6 324.7 546.6 321.8 C546.6 318.9 546.6 315.7 547.7 313.0 C548.8 310.3 551.2 307.0 553.2 305.3 C555.2 303.7 558.0 302.9 559.8 303.1 C561.6 303.3 562.0 306.0 564.2 306.4 C566.4 306.8 570.1 306.0 573.0 305.3 C575.9 304.6 579.8 303.3 581.8 302.0 C583.8 300.7 585.6 299.5 585.1 297.6 C584.5 295.8 579.6 293.2 578.5 291.0 C577.4 288.8 579.8 286.6 578.5 284.4 C577.2 282.2 571.2 279.9 570.8 277.9 C570.4 275.8 574.5 274.2 576.3 272.4 C578.1 270.5 580.9 267.8 581.8 266.9 M450.0 293.2 C452.2 293.6 460.1 293.6 463.2 295.4 C466.3 297.3 466.8 299.8 468.7 304.2 C470.5 308.6 473.4 315.6 474.2 321.8 C474.9 328.0 472.0 335.3 473.1 341.5 C474.2 347.8 477.6 353.3 480.7 359.1 C483.9 365.0 488.4 372.3 491.7 376.7 C495.0 381.1 497.6 383.8 500.5 385.5 C503.4 387.1 506.7 387.7 509.3 386.6 C511.9 385.5 511.5 382.7 515.9 378.9 C520.3 375.0 528.3 367.0 535.7 363.5 C543.0 360.0 554.3 358.0 559.8 358.0 C565.3 358.0 566.0 361.1 568.6 363.5 C571.2 365.9 574.1 370.8 575.2 372.3 M450.0 390.1 C452.2 387.9 459.2 379.7 463.2 376.7 C467.2 373.7 470.9 373.8 474.2 372.3 C477.5 370.8 481.5 368.6 482.9 367.9 M553.2 308.6 C553.0 310.8 553.2 317.8 552.1 321.8 C551.0 325.8 549.0 329.5 546.6 332.8 C544.3 336.1 539.7 336.4 537.9 341.5 C536.0 346.7 536.0 359.9 535.7 363.5 M553.2 315.2 L577.4 316.3 M557.6 311.9 L562.0 304.2 M568.6 311.9 C570.4 313.5 576.8 318.7 579.6 321.8 C582.3 324.9 584.9 328.0 585.1 330.6 C585.3 333.1 580.9 335.0 580.7 337.2 C580.5 339.4 582.0 342.3 584.0 343.7 C586.0 345.2 590.7 346.7 592.8 345.9 C594.8 345.2 595.7 341.9 596.1 339.4 C596.4 336.8 594.0 333.1 595.0 330.6 C595.9 328.0 599.2 326.0 601.5 324.0 C603.9 322.0 607.8 320.3 609.2 318.5 C610.7 316.7 608.7 313.9 610.3 313.0 C612.0 312.1 615.8 313.7 619.1 313.0 C622.4 312.3 626.8 310.4 630.1 308.6 C633.4 306.8 637.8 305.3 638.9 302.0 C640.0 298.7 636.0 292.5 636.7 288.8 C637.4 285.2 639.3 281.5 643.3 280.1 C647.3 278.6 654.3 280.4 660.8 280.1 C667.4 279.7 675.1 278.0 682.8 277.9 C690.5 277.7 700.8 277.7 707.0 279.0 C713.2 280.2 716.1 283.9 720.2 285.5 C724.2 287.2 726.2 288.5 731.1 288.8 C736.1 289.2 746.9 287.9 750.0 287.7 M612.5 313.0 C612.9 310.1 613.4 299.8 614.7 295.4 C616.0 291.0 618.4 288.4 620.2 286.6 C622.0 284.9 624.8 285.2 625.7 284.9 M612.5 316.3 C613.6 318.7 618.2 326.0 619.1 330.6 C620.0 335.1 619.1 340.1 618.0 343.7 C616.9 347.4 613.3 349.2 612.5 352.5 C611.8 355.8 611.8 362.0 613.6 363.5 C615.5 365.0 618.9 359.9 623.5 361.3 C628.1 362.8 638.2 369.0 641.1 372.3 C644.0 375.6 641.1 379.6 641.1 381.1 M616.9 354.7 C622.0 354.2 638.9 352.7 647.7 351.4 C656.5 350.2 663.8 346.7 669.6 347.0 C675.5 347.4 678.8 350.5 682.8 353.6 C686.8 356.7 691.2 360.8 693.8 365.7 C696.4 370.7 697.8 379.2 698.2 383.3 C698.6 387.3 696.4 389.0 696.0 390.1 M652.1 351.4 C651.5 352.7 648.6 356.9 648.8 359.1 C649.0 361.3 652.4 363.7 653.2 364.6 M641.1 299.8 C642.5 302.0 647.3 309.3 649.9 313.0 C652.4 316.7 655.5 319.4 656.5 321.8 C657.4 324.2 654.6 327.3 655.4 327.3 C656.1 327.3 659.4 324.2 660.8 321.8 C662.3 319.4 662.7 313.9 664.1 313.0 C665.6 312.1 666.9 316.8 669.6 316.3 C672.4 315.7 676.2 311.0 680.6 309.7 C685.0 308.4 691.4 308.1 696.0 308.6 C700.6 309.2 704.0 312.8 708.1 313.0 C712.1 313.2 717.2 310.8 720.2 309.7 C723.1 308.6 724.5 308.2 725.6 306.4 C726.7 304.6 725.1 299.5 726.7 298.7 C728.4 298.0 731.6 301.3 735.5 302.0 C739.4 302.7 747.6 302.9 750.0 303.1 M732.2 209.8 L750.0 213.7 M711.4 372.3 L727.8 373.4 M700.4 390.1 C701.5 388.6 705.1 384.0 707.0 381.1 C708.8 378.1 710.6 373.8 711.4 372.3 M582.9 353.6 C583.6 355.6 586.7 362.2 587.3 365.7 C587.8 369.2 586.4 373.0 586.2 374.5 M750.0 214.2 C750.5 214.5 752.6 214.9 753.3 216.4 C754.0 217.8 751.3 220.7 754.4 222.9 C757.5 225.1 767.9 227.0 772.0 229.5 C776.0 232.1 777.1 236.3 778.6 238.3 C780.0 240.3 777.5 240.9 780.7 241.6 C784.0 242.3 794.3 241.2 798.3 242.7 C802.3 244.2 800.9 248.6 804.9 250.4 C808.9 252.2 819.4 251.7 822.5 253.7 C825.6 255.7 823.9 259.2 823.6 262.5 C823.2 265.8 822.7 271.3 820.3 273.5 C817.9 275.7 811.1 274.6 809.3 275.7 C807.5 276.8 807.1 278.6 809.3 280.1 C811.5 281.5 817.2 282.8 822.5 284.4 C827.8 286.1 838.2 288.5 841.1 289.9 C844.1 291.4 845.7 292.0 840.1 293.2 C834.4 294.4 814.8 295.7 807.1 297.2 C799.4 298.6 799.8 300.5 793.9 302.0 C788.1 303.6 779.3 306.2 772.0 306.4 C764.6 306.6 753.7 303.7 750.0 303.1 M750.0 287.7 C751.5 288.7 756.6 291.4 758.8 293.2 C761.0 295.1 761.0 296.5 763.2 298.7 C765.4 300.9 770.5 305.1 772.0 306.4 M817.0 372.3 C816.6 370.8 814.2 365.7 814.8 363.5 C815.3 361.3 817.4 360.9 820.3 359.1 C823.2 357.3 830.3 353.6 832.4 352.5 M775.3 365.7 L773.1 390.1 M620.0 416.2 C622.2 416.6 628.4 417.9 633.2 418.4 C637.9 419.0 642.7 419.0 648.6 419.5 C654.4 420.1 662.1 420.4 668.3 421.7 C674.5 423.0 675.6 424.3 685.9 427.2 C696.1 430.2 718.8 436.2 729.8 439.3 C740.8 442.4 740.8 443.0 751.8 445.9 C762.8 448.8 781.1 452.8 795.7 456.9 C810.4 460.9 825.7 465.7 839.6 470.1 C853.5 474.4 868.2 477.7 879.2 483.2 C890.2 488.7 901.1 499.7 905.5 503.0 M620.0 419.5 L648.6 420.6 M648.6 420.6 C648.2 421.7 648.0 425.2 646.4 427.2 C644.7 429.2 640.1 430.3 638.7 432.7 C637.2 435.1 636.3 437.5 637.6 441.5 C638.9 445.5 643.1 451.4 646.4 456.9 C649.7 462.4 653.3 469.3 657.3 474.4 C661.4 479.6 666.9 484.1 670.5 487.6 C674.2 491.1 677.8 494.0 679.3 495.3 M679.3 498.6 C681.5 500.1 687.7 504.3 692.5 507.4 C697.2 510.5 701.6 513.2 707.9 517.3 C714.1 521.3 728.7 528.1 729.8 531.5 C730.9 535.0 719.9 536.1 714.4 538.1 C709.0 540.2 701.6 541.8 696.9 543.6 C692.1 545.5 688.3 547.1 685.9 549.1 C683.5 551.1 683.0 553.9 682.6 555.7 C682.2 557.5 683.5 559.4 683.7 560.1 M672.7 503.0 C671.6 504.5 666.5 508.9 666.1 511.8 C665.8 514.7 668.3 518.0 670.5 520.6 C672.7 523.1 677.1 525.7 679.3 527.2 C681.5 528.6 683.0 529.0 683.7 529.4 M683.7 560.1 C681.9 559.7 677.1 557.2 672.7 557.9 C668.3 558.6 661.7 562.7 657.3 564.5 C652.9 566.3 650.4 567.8 646.4 568.9 C642.3 570.0 635.4 570.7 633.2 571.1 M646.4 568.9 L647.5 580.1 M694.7 580.1 C694.3 579.0 691.4 575.5 692.5 573.3 C693.6 571.0 699.3 569.3 701.3 566.7 C703.3 564.1 704.0 559.4 704.6 557.9 M696.9 380.0 C696.5 383.7 695.8 395.7 694.7 402.0 C693.6 408.2 691.7 413.1 690.3 417.3 C688.8 421.5 686.6 425.6 685.9 427.2 M718.8 382.2 C720.3 383.7 725.8 387.3 727.6 391.0 C729.5 394.6 727.8 400.1 729.8 404.2 C731.8 408.2 739.0 410.7 739.7 415.1 C740.4 419.5 735.9 426.5 734.2 430.5 C732.6 434.5 730.5 437.8 729.8 439.3 M773.7 380.0 C773.7 383.7 774.1 396.1 773.7 402.0 C773.4 407.8 773.7 411.5 771.5 415.1 C769.4 418.8 763.1 420.3 760.6 423.9 C758.0 427.6 757.6 433.4 756.2 437.1 C754.7 440.8 752.5 444.4 751.8 445.9 M765.0 408.6 C766.4 409.3 772.6 411.8 773.7 412.9 C774.8 414.0 770.3 412.9 771.5 415.1 C772.8 417.3 779.8 424.3 781.4 426.1 M749.6 450.3 C751.4 452.1 757.3 458.0 760.6 461.3 C763.9 464.6 765.0 468.8 769.4 470.1 C773.7 471.3 782.9 468.6 786.9 469.0 C790.9 469.3 792.4 471.7 793.5 472.2 M786.9 393.2 C787.3 395.7 787.7 404.5 789.1 408.6 C790.6 412.6 790.9 413.7 795.7 417.3 C800.5 421.0 811.4 426.9 817.7 430.5 C823.9 434.2 827.6 436.7 833.0 439.3 C838.5 441.9 845.1 443.3 850.6 445.9 C856.1 448.5 862.0 452.1 866.0 454.7 C870.0 457.2 871.8 459.8 874.8 461.3 C877.7 462.7 879.9 464.2 883.6 463.5 C887.2 462.7 893.1 459.8 896.7 456.9 C900.4 453.9 902.6 449.6 905.5 445.9 C908.5 442.2 912.8 436.7 914.3 434.9 M808.9 521.7 C811.4 522.4 818.4 526.6 824.3 526.1 C830.1 525.5 837.8 521.1 844.0 518.4 C850.3 515.6 856.1 513.6 861.6 509.6 C867.1 505.6 873.3 498.6 877.0 494.2 C880.6 489.8 882.5 485.1 883.6 483.2 M820.0 357.4 C821.8 356.4 828.5 351.8 830.9 351.4 C833.3 351.0 830.7 354.2 834.5 355.0 C838.3 355.8 848.6 356.8 853.8 356.2 C859.0 355.6 861.9 351.2 865.9 351.4 C869.9 351.6 872.3 354.2 878.0 357.4 C883.6 360.7 893.3 366.9 899.7 370.7 C906.2 374.5 912.6 377.2 916.6 380.4 C920.6 383.6 922.7 384.0 923.9 390.0 C925.1 396.1 925.1 409.4 923.9 416.6 C922.7 423.9 919.8 428.3 916.6 433.5 C913.4 438.8 908.6 443.8 904.5 448.0 C900.5 452.2 896.1 456.1 892.5 458.9 C888.8 461.7 885.6 464.3 882.8 464.9 C880.0 465.5 877.6 463.7 875.6 462.5 C873.5 461.3 870.3 459.5 870.7 457.7 C871.1 455.9 876.8 452.6 878.0 451.6 M864.7 342.9 L865.9 351.4 M898.5 352.6 C900.3 352.3 905.1 351.4 909.4 350.9 C913.6 350.4 921.4 349.7 923.9 349.5 M923.9 341.3 L923.9 343.2 M899.7 370.7 C901.7 370.5 907.8 371.1 911.8 369.5 C915.8 367.9 921.9 362.5 923.9 361.1 M881.6 376.8 C883.0 379.0 888.2 385.8 890.0 390.0 C891.9 394.3 890.2 398.9 892.5 402.1 C894.7 405.3 901.5 406.6 903.3 409.4 C905.1 412.2 905.1 414.6 903.3 419.0 C901.5 423.5 896.3 430.7 892.5 435.9 C888.6 441.2 882.8 447.8 880.4 450.4 C878.0 453.1 878.4 451.4 878.0 451.6 M881.6 403.3 C881.4 405.5 881.0 408.6 880.4 416.6 C879.8 424.7 878.6 444.0 878.0 451.6 C877.4 459.3 877.0 460.7 876.8 462.5 M880.4 409.4 L903.3 410.6 M880.4 417.8 L921.4 419.5 M820.0 432.3 C822.8 433.5 830.9 436.5 836.9 439.6 C842.9 442.6 850.4 447.0 856.2 450.4 C862.1 453.9 867.9 457.7 871.9 460.1 C876.0 462.5 877.0 465.1 880.4 464.9 C883.8 464.7 890.5 459.9 892.5 458.9 M882.8 464.9 C882.4 467.3 881.8 473.8 880.4 479.4 C879.0 485.1 875.4 495.5 874.3 498.7 M894.9 458.9 C895.7 460.7 898.1 466.1 899.7 469.8 C901.3 473.4 901.3 477.6 904.5 480.6 C907.8 483.6 916.6 486.7 919.0 487.9 M903.3 471.0 L913.0 472.2 M904.5 479.4 L913.0 480.6 M820.0 464.9 C824.0 466.1 834.5 469.2 844.2 472.2 C853.8 475.2 868.7 478.6 878.0 483.0 C887.2 487.5 894.1 494.9 899.7 498.7 C905.3 502.6 909.8 504.8 911.8 506.0 M820.0 527.7 C823.2 526.5 832.9 523.3 839.3 520.5 C845.8 517.7 852.8 514.4 858.6 510.8 C864.5 507.2 870.9 502.4 874.3 498.7 C877.8 495.1 878.4 490.7 879.2 489.1 M923.9 508.4 C922.7 511.2 919.0 520.0 916.6 525.3 C914.2 530.6 910.6 537.6 909.4 540.0 M400.0 636.0 C404.3 631.4 414.5 620.2 425.7 608.4 C436.9 596.5 457.6 575.1 467.2 564.9 C476.7 554.7 479.3 551.4 483.0 547.2 C486.6 542.9 486.9 544.5 488.9 539.3 C490.9 534.0 491.9 524.1 494.8 515.6 C497.8 507.0 503.7 493.8 506.7 487.9 C509.6 482.0 511.6 481.3 512.6 480.0 M452.3 565.3 C454.5 563.3 461.1 557.8 465.2 553.1 C469.3 548.4 474.1 542.9 477.0 537.3 C480.0 531.7 480.0 526.4 483.0 519.5 C485.9 512.6 491.5 502.4 494.8 495.8 C498.1 489.2 501.4 482.6 502.7 480.0 M400.0 517.5 C401.6 516.9 406.9 516.5 409.9 513.6 C412.8 510.6 415.1 503.4 417.8 499.8 C420.4 496.1 422.1 493.5 425.7 491.9 C429.3 490.2 433.9 490.2 439.5 489.9 C445.1 489.5 454.7 490.5 459.3 489.9 C463.9 489.2 464.5 487.6 467.2 485.9 C469.8 484.3 473.7 481.0 475.1 480.0 M467.2 485.9 C467.8 487.6 470.8 492.5 471.1 495.8 C471.4 499.1 469.5 504.0 469.1 505.7 M475.1 485.9 C476.4 487.6 480.0 492.8 483.0 495.8 C485.9 498.8 491.2 502.4 492.8 503.7 M488.9 549.1 C490.2 550.8 495.1 556.0 496.8 559.0 C498.4 562.0 498.6 560.3 498.8 566.9 C498.9 573.5 498.4 590.6 497.8 598.5 C497.1 606.4 496.3 609.1 494.8 614.3 C493.3 619.6 490.7 626.5 488.9 630.1 C487.1 633.7 484.4 633.4 484.0 636.0 C483.5 638.7 484.4 643.0 485.9 645.9 C487.4 648.9 491.0 653.5 492.8 653.8 C494.7 654.2 496.1 651.9 496.8 647.9 C497.4 644.0 495.8 635.1 496.8 630.1 C497.8 625.2 500.4 620.7 502.7 618.3 C505.0 615.8 507.3 615.3 510.6 615.3 C513.9 615.3 519.8 616.5 522.5 618.3 C525.1 620.1 524.4 623.9 526.4 626.2 C528.4 628.5 529.1 631.1 534.3 632.1 C539.6 633.1 550.8 631.6 558.0 632.1 C565.3 632.6 572.5 634.1 577.8 635.1 C583.0 636.0 586.3 637.2 589.6 638.0 C592.9 638.8 596.2 639.7 597.5 640.0 M494.8 576.8 C496.1 576.8 500.4 575.1 502.7 576.8 C505.0 578.4 506.3 584.2 508.6 586.7 C510.9 589.1 513.3 591.1 516.5 591.6 C519.8 592.1 525.8 588.8 528.4 589.6 C531.0 590.5 532.3 594.1 532.3 596.5 C532.3 599.0 530.2 602.0 528.4 604.4 C526.6 606.9 521.5 609.4 521.5 611.4 C521.5 613.3 527.2 613.8 528.4 616.3 C529.5 618.8 528.4 624.5 528.4 626.2 M603.5 638.0 C605.8 634.7 611.2 626.2 617.3 618.3 C623.4 610.4 636.2 595.2 640.0 590.6 M618.3 570.9 C619.1 572.2 620.7 576.1 623.2 578.8 C625.7 581.4 630.3 584.9 633.1 586.7 C635.9 588.5 638.8 589.1 640.0 589.6 M631.1 571.9 L640.0 569.9 M577.8 480.0 C579.8 481.0 585.0 484.3 589.6 485.9 C594.2 487.6 601.3 487.7 605.4 489.9 C609.5 492.0 612.8 497.3 614.3 498.8 M489.9 545.2 L494.8 535.3 M579.8 636.0 C581.1 634.7 585.0 629.8 587.7 628.1 C590.3 626.5 593.3 625.8 595.6 626.2 C597.9 626.5 600.2 628.1 601.5 630.1 C602.8 632.1 603.1 636.7 603.5 638.0 M589.6 638.0 L595.6 627.2 M601.5 655.2 C600.2 656.2 597.5 658.1 593.6 661.1 C589.6 664.1 580.4 671.0 577.8 673.0 M605.4 657.2 C605.8 659.1 606.7 665.7 607.4 669.0 C608.1 672.3 609.1 675.6 609.4 676.9 M594.6 671.0 C595.7 672.0 597.7 676.0 601.5 676.9 C605.3 677.8 610.9 677.3 617.3 676.5 C623.7 675.7 636.2 672.7 640.0 672.0 M597.5 657.2 C596.2 659.1 590.1 666.7 589.6 669.0 C589.1 671.3 593.7 670.7 594.6 671.0 M620.0 617.1 C623.5 612.5 636.3 597.3 640.9 589.7 C645.4 582.0 646.2 575.2 647.5 571.0 C648.7 566.8 648.4 565.5 648.6 564.4 M631.0 571.0 C633.7 570.6 642.3 570.6 647.5 568.8 C652.6 567.0 659.4 561.5 661.7 560.0 M620.0 571.0 C620.7 572.4 622.2 577.4 624.4 579.8 C626.6 582.1 630.4 583.8 633.2 585.3 C635.9 586.7 639.6 588.0 640.9 588.6 M704.6 560.0 C702.5 561.6 694.1 567.0 692.5 569.9 C690.8 572.8 692.8 574.8 694.7 577.6 C696.5 580.3 700.9 583.1 703.5 586.4 C706.0 589.7 707.9 593.3 710.1 597.3 C712.2 601.4 713.7 607.0 716.6 610.5 C719.6 614.0 725.8 614.5 727.6 618.2 C729.5 621.9 728.4 627.9 727.6 632.5 C726.9 637.1 725.6 641.8 723.2 645.7 C720.8 649.5 715.2 652.2 713.3 655.5 C711.5 658.8 711.5 662.3 712.2 665.4 C713.0 668.5 717.0 671.5 717.7 674.2 C718.5 677.0 718.3 680.1 716.6 681.9 C715.0 683.7 711.5 683.5 707.9 685.2 C704.2 686.8 698.0 690.7 694.7 691.8 C691.4 692.9 691.4 694.3 688.1 691.8 C684.8 689.2 679.9 681.5 674.9 676.4 C670.0 671.3 662.8 662.5 658.4 661.0 C654.0 659.6 652.8 665.6 648.6 667.6 C644.3 669.6 637.9 671.8 633.2 673.1 C628.4 674.4 622.2 674.9 620.0 675.3 M902.2 560.0 C902.0 562.2 903.1 567.7 901.1 573.2 C899.1 578.7 894.5 585.6 890.2 592.9 C885.8 600.3 879.9 609.1 874.8 617.1 C869.7 625.2 864.2 634.3 859.4 641.3 C854.6 648.2 850.6 653.0 846.2 658.8 C841.8 664.7 836.3 671.6 833.0 676.4 C829.8 681.2 829.4 684.5 826.5 687.4 C823.5 690.3 819.1 693.4 815.5 694.0 C811.8 694.5 807.8 690.7 804.5 690.7 C801.2 690.7 798.3 693.8 795.7 694.0 C793.1 694.2 793.0 691.0 789.1 691.8 C785.3 692.6 775.4 697.6 772.6 698.8 M683.8 566.6 C681.4 565.2 674.8 557.9 669.5 557.9 C664.2 557.9 658.2 564.3 652.0 566.6 C645.7 569.0 635.5 571.2 632.2 572.1 M647.6 568.8 C647.4 570.7 647.9 576.2 646.5 579.8 C645.0 583.5 641.5 587.1 638.8 590.8 C636.0 594.5 631.5 600.0 630.0 601.8 M630.0 584.2 L639.9 589.7 M924.3 509.5 C922.5 512.8 917.0 522.0 913.3 529.3 C909.7 536.6 904.5 546.9 902.3 553.5 C900.2 560.1 902.3 562.2 900.2 568.8 C898.0 575.4 892.8 586.0 889.2 593.0 C885.5 600.0 881.1 605.8 878.2 610.6 C875.3 615.3 872.7 619.7 871.6 621.5 M475.3 350.0 C476.3 351.8 478.7 357.5 480.8 360.9 C482.9 364.2 485.3 366.3 488.0 369.9 C490.7 373.5 493.8 379.9 497.1 382.6 C500.4 385.3 505.2 385.6 507.9 386.2 C510.7 386.8 512.5 386.2 513.4 386.2 M535.1 350.0 C535.4 351.2 537.2 355.0 536.9 357.2 C536.6 359.5 536.3 360.9 533.3 363.6 C530.3 366.3 522.7 370.4 518.8 373.5 C514.9 376.7 511.3 381.1 509.8 382.6 M533.3 363.6 C536.3 362.7 547.2 359.2 551.4 358.1 C555.6 357.1 556.2 356.6 558.6 357.2 C561.1 357.8 563.2 359.8 565.9 361.8 C568.6 363.7 573.4 367.8 574.9 369.0 M482.6 368.1 C481.1 369.3 476.0 372.3 473.5 375.3 C471.1 378.4 469.5 381.7 468.1 386.2 C466.7 390.7 466.6 396.5 465.4 402.5 C464.2 408.5 463.1 418.2 460.9 422.4 C458.6 426.7 453.3 427.0 451.8 427.9 M452.7 398.0 L466.3 400.7 M450.0 428.8 C453.0 428.5 462.1 427.9 468.1 427.0 C474.1 426.0 481.4 423.8 486.2 423.3 C491.0 422.9 495.3 424.1 497.1 424.2 M468.1 404.3 C469.6 407.6 472.0 418.8 477.2 424.2 C482.3 429.7 495.3 434.8 498.9 436.9 M483.5 414.3 L479.0 421.5 M450.0 431.5 C450.6 433.0 453.3 437.2 453.6 440.5 C453.9 443.9 451.2 447.8 451.8 451.4 C452.4 455.0 454.5 458.3 457.2 462.3 C460.0 466.2 465.4 471.9 468.1 474.9 C470.8 478.0 472.6 479.5 473.5 480.4 M473.5 480.4 L493.5 484.9 M471.7 482.2 C471.3 486.1 468.9 501.6 469.0 505.7 C469.2 509.8 472.0 506.5 472.6 506.6 M477.2 487.6 L478.1 494.9 M479.0 484.0 C480.2 485.8 483.5 491.5 486.2 494.9 C488.9 498.2 493.8 502.4 495.3 503.9 M497.1 515.0 C498.0 512.5 498.9 506.7 502.5 500.3 C506.1 493.9 511.9 484.3 518.8 476.7 C525.7 469.2 537.5 460.5 544.2 455.0 C550.8 449.6 556.2 446.0 558.6 444.2 M488.9 515.0 C490.0 512.5 491.8 506.1 495.3 500.3 C498.7 494.5 504.0 487.0 509.8 480.4 C515.5 473.7 526.4 463.8 529.7 460.5 M558.6 444.2 C561.7 441.7 569.2 433.3 576.7 429.7 C584.3 426.0 594.9 424.1 603.9 422.4 C613.0 420.8 623.5 420.3 631.1 419.7 C638.6 419.1 642.7 418.7 649.2 418.8 C655.7 419.0 666.5 420.3 670.0 420.6 M618.4 413.4 C620.5 414.0 625.9 416.1 631.1 417.0 C636.2 417.9 646.2 418.5 649.2 418.8 M584.0 353.6 C584.6 355.4 586.9 362.1 587.6 364.5 C588.4 366.9 588.4 367.5 588.5 368.1 M611.2 359.1 L613.0 350.0 M616.6 357.2 C619.0 356.6 625.6 354.5 631.1 353.6 C636.5 352.7 642.7 352.4 649.2 351.8 C655.7 351.2 666.5 350.3 670.0 350.0 M651.0 351.8 C650.7 353.0 648.9 357.1 649.2 359.1 C649.5 361.0 652.2 362.8 652.8 363.6 M623.8 364.5 C626.5 366.0 637.7 369.9 640.1 373.5 C642.5 377.2 639.8 381.1 638.3 386.2 C636.8 391.3 634.4 399.8 631.1 404.3 C627.8 408.8 620.5 411.9 618.4 413.4 M649.2 418.8 C647.1 420.9 638.3 427.3 636.5 431.5 C634.7 435.7 636.2 438.4 638.3 444.2 C640.4 449.9 645.0 459.8 649.2 465.9 C653.4 471.9 660.2 476.7 663.7 480.4 C667.1 484.0 668.9 486.4 670.0 487.6 M574.9 474.9 C577.1 476.4 583.4 482.0 587.6 484.0 C591.8 486.0 595.9 484.3 600.3 486.7 C604.7 489.1 611.6 496.5 613.9 498.5" stroke="#b9b9c4" stroke-width="1.25" stroke-dasharray="1.4 1.6" stroke-linecap="butt"/></g>
<defs><pattern id="wat" width="2.6" height="2.6" patternUnits="userSpaceOnUse"><rect width="2.6" height="2.6" fill="#3f74ee"/><path d="M0 0H2.6M0 0V2.6" stroke="#bcd2ff" stroke-width="0.8"/></pattern></defs>
<path fill="url(#wat)" stroke="#1b1f80" stroke-width="1" stroke-linejoin="round" d="M742.8 332.3 L745.4 335.0 L746.9 342.2 L743.7 341.5Z M670.7 353.6 L676.2 355.2 L674.0 356.9Z M678.9 405.3 L681.9 414.0 L677.1 414.0Z M759.5 421.7 L771.1 416.2 L770.0 421.3Z M870.4 462.4 L881.4 465.2 L875.9 465.7Z M901.8 469.0 L911.0 470.5 L909.9 472.2 L903.3 471.1Z M862.8 367.1 L867.1 366.4 L872.8 369.2 L880.6 371.4 L878.5 376.4 L872.8 378.1 L867.8 377.1 L866.4 372.1Z M825.0 402.8 L827.8 399.2 L830.7 402.8Z M828.3 410.6 L833.5 415.6 L829.3 417.8Z M832.8 427.8 L836.4 433.5 L836.4 439.2 L830.7 436.3Z"/>
<circle cx="670.3" cy="345.5" r="1.3" fill="#4a7df0" stroke="#1b1f80" stroke-width="1"/>
<circle cx="623.5" cy="365.7" r="1.7" fill="#4a7df0" stroke="#1b1f80" stroke-width="1"/>
<circle cx="880.3" cy="505.6" r="2" fill="#4a7df0" stroke="#1b1f80" stroke-width="1"/>
<circle cx="849.9" cy="345.0" r="3.0" fill="#4a7df0" stroke="#1b1f80" stroke-width="1"/>
<circle cx="908.5" cy="364.3" r="1.5" fill="#4a7df0" stroke="#1b1f80" stroke-width="1"/>
<circle cx="900.9" cy="492.7" r="1.2" fill="#4a7df0" stroke="#1b1f80" stroke-width="1"/>
</g>
<g clip-path="url(#mapclip)" fill="#fff" stroke="#565656" stroke-width="2.7" paint-order="stroke" stroke-linejoin="round">
<g fill="#4f8f4f" stroke="#fff" stroke-width="1.5" paint-order="normal">
<circle cx="546" cy="409.2" r="5.2"/><circle cx="559.5" cy="460.5" r="5.2"/><circle cx="679.3" cy="496.8" r="5"/><circle cx="911.5" cy="511.8" r="5"/>
<circle cx="683.7" cy="562.3" r="5" stroke="#fff" stroke-width="1.4" paint-order="normal"/><circle cx="603.5" cy="650.2" r="5" stroke="#fff" stroke-width="1.4" paint-order="normal"/>
</g>
<text x="551" y="402.5" font-size="17.8" font-style="italic">Swellendam</text>
<text x="564" y="454.7" font-size="15.6">Railton</text>
<text x="683.5" y="491" font-size="12.95">Bontebok National Park Entrance Gate</text>
<text x="688" y="556.4" font-size="12.97">Bontebok National Park Reception &amp; Shop</text>
<text x="607.4" y="645.3" font-size="11">Lang Elsies Kraal Rest Camp</text>
<text x="916.5" y="505.5" font-size="18" font-style="italic">Buffeljagsrivier</text>
</g>
<text x="440" y="163" font-size="40.2" font-style="italic" fill="#000">Swellendam</text>
<!-- legend -->
<g fill="#000" font-size="13.2">
<text x="110" y="330.5" font-size="17.8">Legend</text>
<circle cx="121" cy="351.6" r="3.9" fill="#4f8f4f"/>
<text x="139" y="356.5">Places</text>
<path d="M110 377H132" stroke="#fbe88f" stroke-width="2.9"/><path d="M110 377H132" stroke="#b9b9c4" stroke-width="1.25" stroke-dasharray="1.4 1.6"/>
<text x="139" y="381.8">Roads and Streets</text>
<rect x="110.5" y="396" width="20.5" height="12" fill="#5a8bf0" stroke="#23277a" stroke-width="1"/>
<path d="M112 399H130M112 402H130M112 405H130M113.5 397V407M116.5 397V407M119.5 397V407M122.5 397V407M125.5 397V407M128.5 397V407" stroke="#cfe0ff" stroke-width="0.9" fill="none"/>
<text x="139" y="407.7">Surface Water</text>
<path d="M110 427.7H132" stroke="#a3cdfb" stroke-width="1"/>
<text x="139" y="432.3">Rivers</text>
<rect x="110" y="447.5" width="21" height="10.7" fill="#dcf5cb"/><text x="139" y="457.7">Rural, small</text>
<rect x="110" y="466.4" width="21" height="10.7" fill="#85b66f"/><text x="139" y="476.5">Rural, large</text>
<rect x="110" y="485.2" width="21" height="10.7" fill="#8fbdb3"/><text x="139" y="495.9">Swellendam</text>
<rect x="110" y="504.3" width="21" height="10.7" fill="#dfecf0"/><text x="139" y="514.9">Residential</text>
</g>

</svg></div>
<div id="vsb"><div class="thumb" style="left:3px;top:3px;width:8px;height:505px"></div></div>
<div id="hsb"><div class="thumb" style="left:14px;top:3px;width:850px;height:8px"></div></div>
<div id="corner"></div>
<div class="btn" style="left:6px;top:770px;width:57px">Help</div>
<div class="btn" style="left:911px;top:770px;width:64px">Close</div>
<div id="rp"><div id="rpi"><div class="dtitle" style="top:0;height:27px;line-height:22px;padding-left:20px">Command history<span class="xbtn" style="top:5px"></span></div>
<div id="hist">
<div>Legend item edited</div><div>Legend item edited</div><div>Legend updated</div><div>Legend item removed</div><div>Legend item edited</div><div>Legend updated</div><div>Legend updated</div><div>Moved legend item up</div><div class="sel">Moved legend item up</div>
</div>
<div style="left:387px;top:27px;width:16px;height:136px;background:linear-gradient(90deg,#f0f0f0,#fbfbfb 40%,#fafafa);border-left:1px solid #e6e6e6"><div class="thumb" style="left:3px;top:105px;width:8px;height:30px"></div></div>
<div style="left:0;top:163px;width:403px;height:1px;background:#9e9e9e"></div>
<!-- tabs -->
<div style="left:1px;top:175px;width:401px;height:13px;border:1px solid #bdbdbd;border-bottom:none;border-radius:5px 5px 0 0;background:#e9e9e9"></div>
<div style="left:41px;top:165px;width:324px;height:21px;border:1px solid #9c9c9c;border-radius:5px;background:linear-gradient(#fff,#f3f3f3 50%,#e9e9e9 51%,#f3f3f3);box-shadow:0 1px 0 rgba(0,0,0,.08);overflow:hidden;font-size:13px;line-height:17px;text-align:center">
 <div class="abs" style="left:0;top:0;width:92px;height:19px">Composition</div>
 <div class="abs" style="left:92px;top:0;width:115px;height:19px;background:linear-gradient(#8d8d8d,#a3a3a3 45%,#909090 55%,#858585);color:#fff;border-left:1px solid #6e6e6e;border-right:1px solid #6e6e6e;text-shadow:0 1px 0 rgba(0,0,0,.3)">Item Properties</div>
 <div class="abs" style="left:207px;top:0;width:115px;height:19px">Atlas generation</div>
</div>
<div class="dtitle" style="top:186px;height:26px;line-height:23px;padding-left:20px">Item Properties<span class="xbtn" style="top:4px"></span></div>
<div style="left:0;top:212px;width:403px;height:18px;background:#c9c9c9;border-bottom:1px solid #a7a7a7;font-weight:bold;font-size:13px;line-height:15px;padding-left:5px">Legend</div>
<!-- scroll area -->
<div style="left:0;top:230px;width:403px;height:509px;overflow:hidden" id="sa">
 <div class="abs tri-d" style="left:15px;top:-4px"></div>
 <div class="abs lbl" style="left:34px;top:-9px">Main properties</div>
 <div class="abs grp" style="left:13px;top:10px;width:363px;height:98px"></div>
 <div class="abs lbl" style="left:24px;top:24px">Title</div>
 <div class="abs inp" style="left:104px;top:22px;width:260px">Legend</div>
 <div class="abs lbl" style="left:24px;top:50px">Map</div>
 <div class="abs" style="left:103px;top:50px;width:262px;height:20px;border:1px solid #9a9a9a;border-radius:4px;background:linear-gradient(#fff,#f5f5f5 50%,#eaeaea 51%,#f2f2f2);font-size:13px;line-height:15px;padding-left:8px;box-shadow:0 1px 0 rgba(0,0,0,.1)">Map 0
  <svg class="abs" style="right:5px;top:3px" width="7" height="12"><path d="M3.5 0.5 6 4H1zM3.5 11.5 6 8H1z" fill="#444"/></svg></div>
 <div class="abs lbl" style="left:24px;top:77px">Wrap text on</div>
 <div class="abs inp" style="left:104px;top:75px;width:260px"></div>

 <div class="abs tri-d" style="left:15px;top:132px"></div>
 <div class="abs lbl" style="left:34px;top:126px">Legend items</div>
 <div class="abs grp" style="left:13px;top:145px;width:363px;height:298px"></div>
 <div class="abs sq" style="left:24px;top:157px;width:88px;height:22px;line-height:20px">Update item</div>
 <div class="abs sq" style="left:118px;top:157px;width:77px;height:22px;line-height:20px">Update all</div>
 <!-- tree -->
 <div class="abs" id="tree" style="left:24px;top:185px;width:341px;height:193px;background:#fff;border:1px solid #8a96a8;box-shadow:0 0 2px 1px rgba(90,110,150,.55);font-size:13px;line-height:13px;overflow:hidden">
  <div class="abs" style="left:0;top:0;width:339px;height:17px;background:linear-gradient(#fff,#f4f4f4 50%,#ececec 51%,#f3f3f3);border-bottom:1px solid #c2c2c2"></div>
  <div class="abs" style="left:187px;top:3px;width:1px;height:11px;background:#b5b5b5"></div>
  <div class="abs" style="left:5px;top:2px">1</div><div class="abs" style="left:192px;top:2px">2</div>
  <style>
#tree .r{position:absolute;left:25px;height:13px;line-height:13px;white-space:nowrap}
#tree .h{position:absolute;left:192px;height:13px;line-height:13px}
#tree .c{position:absolute;left:71px;height:16px;line-height:16px;white-space:nowrap}
#tree .ar{position:absolute;left:8px;width:0;height:0;border-top:3px solid transparent;border-bottom:4px solid transparent;border-left:7px solid #7d7d7d}
#tree .ad{position:absolute;left:7px;width:0;height:0;border-left:4px solid transparent;border-right:4px solid transparent;border-top:6px solid #7d7d7d}
#tree .sw{position:absolute;left:45px;width:16px;height:16px}
</style>
<div class="r" style="top:17px">Places</div><div class="h" style="top:17px">Hidden</div><i class="ar" style="top:21px"></i>
<div class="r" style="top:30px">Roads and Streets</div><div class="h" style="top:30px">Hidden</div><i class="ar" style="top:34px"></i>
<div class="r" style="top:43px">Surface Water</div><div class="h" style="top:43px">Hidden</div><i class="ar" style="top:47px"></i>
<div class="r" style="top:56px">Rivers</div><div class="h" style="top:56px">Hidden</div><i class="ar" style="top:60px"></i>
<div class="r" style="top:69px">landuse</div><div class="h" style="top:69px">Hidden</div><i class="ad" style="top:74px"></i>
<div class="abs" style="left:1px;top:99px;width:187px;height:15.500px;background:#3875d7"></div>
<i class="sw" style="top:83px;background:#dcf5cb"></i><i class="sw" style="top:99px;background:#8cb97f;height:15.500px"></i><i class="sw" style="top:115px;background:#8fbdb3"></i><i class="sw" style="top:131px;background:#dfecf0"></i>
<div class="c" style="top:83px">Rural, small</div>
<div class="c" style="top:99px;color:#fff">Rural, large</div>
<div class="c" style="top:115px">Swellendam</div>
<div class="c" style="top:131px">Residential</div>

 </div>
 <div class="abs tb" style="left:24px;top:384px"><svg width="28" height="27"><defs><linearGradient id="bl" x1="0" y1="0" x2="0" y2="1"><stop offset="0" stop-color="#5aa0ff"/><stop offset="1" stop-color="#1763e8"/></linearGradient></defs><path d="M6.500 8.500H21.500Q24.500 8.800 23 11.500L15.500 19.500Q14 20.800 12.500 19.500L5 11.500Q3.500 8.800 6.500 8.500Z" fill="url(#bl)" stroke="#1a3fb0" stroke-width="1"/></svg></div>
<div class="abs tb" style="left:57px;top:384px"><svg width="28" height="27"><path d="M6.500 19.500H21.500Q24.500 19.200 23 16.500L15.500 8.500Q14 7.200 12.500 8.500L5 16.500Q3.500 19.200 6.500 19.500Z" fill="url(#bl)" stroke="#1a3fb0" stroke-width="1"/></svg></div>
<div class="abs" style="left:90px;top:386px;width:26px;height:26px;border:1px solid #b9b9b9;background:#ececec"><svg width="24" height="24"><rect x="5.500" y="7.500" width="12" height="12" fill="#e2e2e2" stroke="#a9a9a9"/><path d="M10 4.500V10M12.500 4.500V11.500M10 4.500Q11.200 2.500 12.500 4.500" stroke="#8a8a8a" fill="none" stroke-width="1"/><circle cx="17" cy="18" r="3.300" fill="#6fae6f"/><path d="M15.200 18H18.800M17 16.200V19.800" stroke="#fff" stroke-width="1.100"/></svg></div>
<div class="abs tb" style="left:119px;top:384px"><svg width="28" height="27"><path d="M11 5.500H17V10.500H22V16.500H17V21.500H11V16.500H6V10.500H11Z" fill="#0d9a1f" stroke="#0a7a18" stroke-width="1.600" stroke-linejoin="round"/><path d="M11 5.500H17V10.500H22V16.500H17V21.500H11V16.500H6V10.500H11Z" fill="none" stroke="#d9f5dc" stroke-width=".8" stroke-linejoin="round" transform="translate(14,13.500) scale(.74) translate(-14,-13.500)"/></svg></div>
<div class="abs tb" style="left:152px;top:384px"><svg width="28" height="27"><rect x="5.500" y="9.500" width="17" height="9" rx="2.500" fill="#c00d18" stroke="#980a12" stroke-width="1.400"/><rect x="8" y="12" width="12" height="4" rx="1" fill="none" stroke="#f6c9cc" stroke-width=".8"/></svg></div>
<div class="abs tb" style="left:185px;top:384px"><svg width="28" height="27"><path d="M6.500 5.500H18.500V21.500H5.500Z" fill="#fdfdfd" stroke="#c5c5c5"/><path d="M5.500 21.500H18.500V15L22 17.500L18.500 20" fill="#e3e3e3" stroke="#d0d0d0" stroke-width=".6"/><path d="M16.500 3.500L19 5L12 18.500L9.800 19.800L9.700 17Z" fill="#f5a623" stroke="#d98a10" stroke-width=".6"/><path d="M9.700 17L9.800 19.800L12 18.500Z" fill="#f3d9b0"/></svg></div>
<div class="abs" style="left:218px;top:384px;width:30px;height:29px;border:1px solid #c9c9c9;background:#ebebeb"><svg width="28" height="27"><path d="M20 9V6.500H8L14.500 13.500L8 21.500H20.500V18.500" fill="none" stroke="#c79ac9" stroke-width="1.300"/></svg></div>
<div class="abs" style="left:24px;top:419px;width:13px;height:13px;border:1px solid #7e8792;border-radius:3px;background:linear-gradient(#fdfdfd,#dfe5ec)"></div>
<svg class="abs" style="left:24px;top:414px" width="18" height="18"><path d="M3.500 10.500L6.500 15L13 2.500" fill="none" stroke="#1c1c1c" stroke-width="2" stroke-linecap="round" stroke-linejoin="round"/></svg>

 <div class="abs lbl" style="left:43px;top:417px;letter-spacing:-.1px">Auto Update</div>
 <div class="abs tri-r" style="left:17px;top:463px"></div><div class="abs lbl" style="left:34px;top:461px">Fonts</div>
 <div class="abs tri-r" style="left:17px;top:490px"></div><div class="abs lbl" style="left:34px;top:488px">Columns</div>
 <div class="abs" style="left:387px;top:0;width:16px;height:509px;background:linear-gradient(90deg,#f0f0f0,#fbfbfb 40%,#fafafa);border-left:1px solid #e6e6e6"><div class="thumb" style="left:3px;top:13px;width:8px;height:320px"></div></div>
</div>
</div></div>
<svg style="left:1370px;top:783px" width="15" height="15"><path d="M14 3L3 14M14 7L7 14M14 11L11 14" stroke="#8e8e8e" stroke-width="1"/><path d="M14 4L4 14M14 8L8 14M14 12L12 14" stroke="#fff" stroke-width="1"/></svg>

</div>
</body></html>
